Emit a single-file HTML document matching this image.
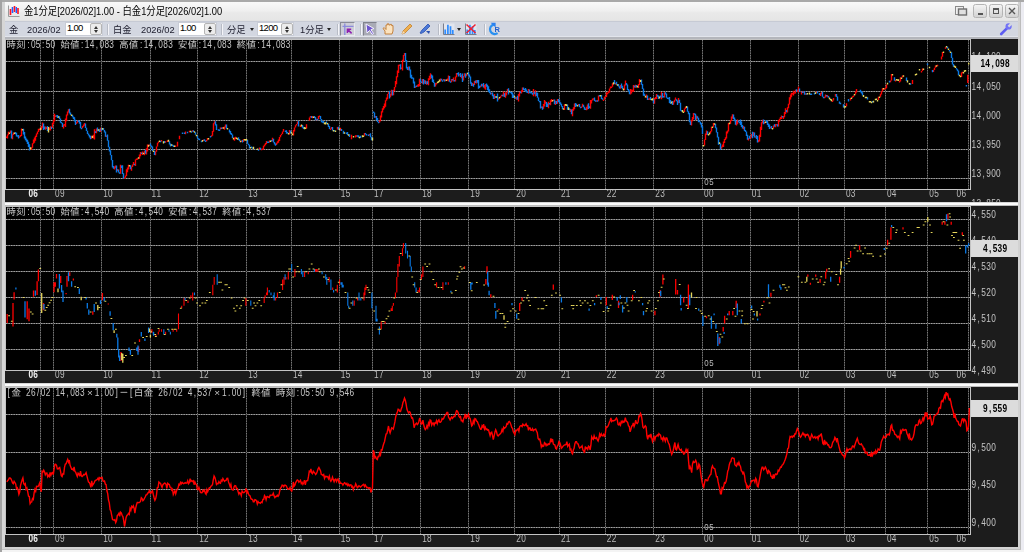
<!DOCTYPE html>
<html lang="ja">
<head>
<meta charset="utf-8">
<title>金1分足[2026/02]1.00 - 白金1分足[2026/02]1.00</title>
<style>
html,body{margin:0;padding:0;}
body{width:1024px;height:552px;overflow:hidden;background:#e2e2e2;position:relative;font-family:"Liberation Sans","Noto Sans CJK JP",sans-serif;}
.abs{position:absolute;}
#ftop{left:0;top:0;width:1024px;height:2px;background:#a9a9a9;}
#fleft{left:0;top:0;width:2px;height:552px;background:#a3a3a3;}
#fleft2{left:2px;top:2px;width:3px;height:548px;background:#d6d6d6;}
#fr1{left:1018px;top:2px;width:2px;height:548px;background:#d2d2d2;}
#fr2{left:1020px;top:2px;width:1px;height:548px;background:#bcbcbc;}
#fr3{left:1021px;top:2px;width:3px;height:550px;background:#ececf2;}
#fb1{left:2px;top:547px;width:1018px;height:2px;background:#d4d4d4;}
#fb2{left:2px;top:549px;width:1019px;height:1px;background:#c0c0c0;}
#fb3{left:2px;top:550px;width:1022px;height:2px;background:#f4f4f4;}
#title{left:4px;top:2px;width:1015px;height:18px;background:linear-gradient(#f9f9f9,#efefef 50%,#e9e9e9 60%,#e6e6e6);}
#ttext{left:24px;top:5px;font-size:11px;line-height:13px;color:#000;white-space:nowrap;transform-origin:0 0;transform:scaleX(0.848);}
#tool{left:4px;top:21px;width:1015px;height:16px;background:#d3d7e1;border-top:1px solid #c6cad4;border-bottom:1px solid #e2e5ec;box-sizing:border-box}
#toolb{left:4px;top:37px;width:1015px;height:2px;background:#b4b6bc;}
.tt{position:absolute;top:25px;font-size:9.3px;line-height:10px;color:#1c1c2c;white-space:nowrap;}
.inp{position:absolute;top:22px;height:14px;background:#fff;border:1px solid #c8ccd6;box-sizing:border-box;font-size:9.5px;line-height:10px;padding-left:1px;color:#000;letter-spacing:-0.7px}
.spin{position:absolute;right:0;top:0;width:12px;height:12px;background:#ececec;border:1px solid #b4b4b4;border-radius:2px;box-sizing:border-box}
.spin:before{content:"";position:absolute;left:2.5px;top:1.5px;border:2.5px solid transparent;border-top:0;border-bottom:3px solid #333;}
.spin:after{content:"";position:absolute;left:2.5px;top:6px;border:2.5px solid transparent;border-bottom:0;border-top:3px solid #333;}
.sep{position:absolute;top:24px;width:1px;height:11px;background:#f4f4f8;border-left:1px solid #b8bcc6}
.dd{position:absolute;top:28px;border:2.5px solid transparent;border-bottom:0;border-top:3px solid #222;}
.sel{position:absolute;top:22px;height:14px;background:#b9bdc9;border:1px solid #8c90a0;box-sizing:border-box}
.wb{position:absolute;top:4px;width:14px;height:14px;box-sizing:border-box;border:1px solid #b4b4b4;border-radius:2.5px;background:linear-gradient(#f4f4f4,#d2d2d2);}
</style>
</head>
<body>
<div class="abs" id="title"></div>
<div class="abs" id="tool"></div>
<div class="abs" id="toolb"></div>
<svg width="1024" height="552" viewBox="0 0 1024 552" style="position:absolute;left:0;top:0;will-change:transform" font-family="&quot;Liberation Mono&quot;,&quot;IPAGothic&quot;,monospace">
<rect x="5" y="39" width="966" height="151" fill="#000"/>
<rect x="971" y="39" width="47" height="163" fill="#1c1c1c"/>
<rect x="5" y="190" width="966" height="12" fill="#1c1c1c"/>
<g>
<line x1="6" x2="970" y1="61.5" y2="61.5" stroke="#4c4c4c" stroke-width="1" stroke-dasharray="none" opacity="1"/>
<line x1="6" x2="970" y1="61.5" y2="61.5" stroke="#a4a4a4" stroke-width="1" stroke-dasharray="1.4 1.1" opacity="1"/>
<line x1="6" x2="970" y1="91.5" y2="91.5" stroke="#4c4c4c" stroke-width="1" stroke-dasharray="none" opacity="1"/>
<line x1="6" x2="970" y1="91.5" y2="91.5" stroke="#a4a4a4" stroke-width="1" stroke-dasharray="1.4 1.1" opacity="1"/>
<line x1="6" x2="970" y1="120.5" y2="120.5" stroke="#4c4c4c" stroke-width="1" stroke-dasharray="none" opacity="1"/>
<line x1="6" x2="970" y1="120.5" y2="120.5" stroke="#a4a4a4" stroke-width="1" stroke-dasharray="1.4 1.1" opacity="1"/>
<line x1="6" x2="970" y1="149.5" y2="149.5" stroke="#4c4c4c" stroke-width="1" stroke-dasharray="none" opacity="1"/>
<line x1="6" x2="970" y1="149.5" y2="149.5" stroke="#a4a4a4" stroke-width="1" stroke-dasharray="1.4 1.1" opacity="1"/>
<line x1="6" x2="970" y1="178.5" y2="178.5" stroke="#4c4c4c" stroke-width="1" stroke-dasharray="none" opacity="1"/>
<line x1="6" x2="970" y1="178.5" y2="178.5" stroke="#a4a4a4" stroke-width="1" stroke-dasharray="1.4 1.1" opacity="1"/>
<line x1="40.5" x2="40.5" y1="40" y2="189" stroke="#2c2c2c" stroke-width="1" stroke-dasharray="none" opacity="1"/>
<line x1="40.5" x2="40.5" y1="40" y2="189" stroke="#787878" stroke-width="1" stroke-dasharray="1.4 1.1" opacity="1"/>
<line x1="53.5" x2="53.5" y1="40" y2="189" stroke="#2c2c2c" stroke-width="1" stroke-dasharray="none" opacity="1"/>
<line x1="53.5" x2="53.5" y1="40" y2="189" stroke="#787878" stroke-width="1" stroke-dasharray="1.4 1.1" opacity="1"/>
<line x1="101.5" x2="101.5" y1="40" y2="189" stroke="#2c2c2c" stroke-width="1" stroke-dasharray="none" opacity="1"/>
<line x1="101.5" x2="101.5" y1="40" y2="189" stroke="#787878" stroke-width="1" stroke-dasharray="1.4 1.1" opacity="1"/>
<line x1="150.5" x2="150.5" y1="40" y2="189" stroke="#2c2c2c" stroke-width="1" stroke-dasharray="none" opacity="1"/>
<line x1="150.5" x2="150.5" y1="40" y2="189" stroke="#787878" stroke-width="1" stroke-dasharray="1.4 1.1" opacity="1"/>
<line x1="197.5" x2="197.5" y1="40" y2="189" stroke="#2c2c2c" stroke-width="1" stroke-dasharray="none" opacity="1"/>
<line x1="197.5" x2="197.5" y1="40" y2="189" stroke="#787878" stroke-width="1" stroke-dasharray="1.4 1.1" opacity="1"/>
<line x1="246.5" x2="246.5" y1="40" y2="189" stroke="#2c2c2c" stroke-width="1" stroke-dasharray="none" opacity="1"/>
<line x1="246.5" x2="246.5" y1="40" y2="189" stroke="#787878" stroke-width="1" stroke-dasharray="1.4 1.1" opacity="1"/>
<line x1="291.5" x2="291.5" y1="40" y2="189" stroke="#2c2c2c" stroke-width="1" stroke-dasharray="none" opacity="1"/>
<line x1="291.5" x2="291.5" y1="40" y2="189" stroke="#787878" stroke-width="1" stroke-dasharray="1.4 1.1" opacity="1"/>
<line x1="339.5" x2="339.5" y1="40" y2="189" stroke="#2c2c2c" stroke-width="1" stroke-dasharray="none" opacity="1"/>
<line x1="339.5" x2="339.5" y1="40" y2="189" stroke="#787878" stroke-width="1" stroke-dasharray="1.4 1.1" opacity="1"/>
<line x1="372.5" x2="372.5" y1="40" y2="189" stroke="#2c2c2c" stroke-width="1" stroke-dasharray="none" opacity="1"/>
<line x1="372.5" x2="372.5" y1="40" y2="189" stroke="#787878" stroke-width="1" stroke-dasharray="1.4 1.1" opacity="1"/>
<line x1="420.5" x2="420.5" y1="40" y2="189" stroke="#2c2c2c" stroke-width="1" stroke-dasharray="none" opacity="1"/>
<line x1="420.5" x2="420.5" y1="40" y2="189" stroke="#787878" stroke-width="1" stroke-dasharray="1.4 1.1" opacity="1"/>
<line x1="468.5" x2="468.5" y1="40" y2="189" stroke="#2c2c2c" stroke-width="1" stroke-dasharray="none" opacity="1"/>
<line x1="468.5" x2="468.5" y1="40" y2="189" stroke="#787878" stroke-width="1" stroke-dasharray="1.4 1.1" opacity="1"/>
<line x1="514.5" x2="514.5" y1="40" y2="189" stroke="#2c2c2c" stroke-width="1" stroke-dasharray="none" opacity="1"/>
<line x1="514.5" x2="514.5" y1="40" y2="189" stroke="#787878" stroke-width="1" stroke-dasharray="1.4 1.1" opacity="1"/>
<line x1="559.5" x2="559.5" y1="40" y2="189" stroke="#2c2c2c" stroke-width="1" stroke-dasharray="none" opacity="1"/>
<line x1="559.5" x2="559.5" y1="40" y2="189" stroke="#787878" stroke-width="1" stroke-dasharray="1.4 1.1" opacity="1"/>
<line x1="605.5" x2="605.5" y1="40" y2="189" stroke="#2c2c2c" stroke-width="1" stroke-dasharray="none" opacity="1"/>
<line x1="605.5" x2="605.5" y1="40" y2="189" stroke="#787878" stroke-width="1" stroke-dasharray="1.4 1.1" opacity="1"/>
<line x1="653.5" x2="653.5" y1="40" y2="189" stroke="#2c2c2c" stroke-width="1" stroke-dasharray="none" opacity="1"/>
<line x1="653.5" x2="653.5" y1="40" y2="189" stroke="#787878" stroke-width="1" stroke-dasharray="1.4 1.1" opacity="1"/>
<line x1="702.5" x2="702.5" y1="40" y2="189" stroke="#2c2c2c" stroke-width="1" stroke-dasharray="none" opacity="1"/>
<line x1="702.5" x2="702.5" y1="40" y2="189" stroke="#787878" stroke-width="1" stroke-dasharray="1.4 1.1" opacity="1"/>
<line x1="750.5" x2="750.5" y1="40" y2="189" stroke="#2c2c2c" stroke-width="1" stroke-dasharray="none" opacity="1"/>
<line x1="750.5" x2="750.5" y1="40" y2="189" stroke="#787878" stroke-width="1" stroke-dasharray="1.4 1.1" opacity="1"/>
<line x1="798.5" x2="798.5" y1="40" y2="189" stroke="#2c2c2c" stroke-width="1" stroke-dasharray="none" opacity="1"/>
<line x1="798.5" x2="798.5" y1="40" y2="189" stroke="#787878" stroke-width="1" stroke-dasharray="1.4 1.1" opacity="1"/>
<line x1="844.5" x2="844.5" y1="40" y2="189" stroke="#2c2c2c" stroke-width="1" stroke-dasharray="none" opacity="1"/>
<line x1="844.5" x2="844.5" y1="40" y2="189" stroke="#787878" stroke-width="1" stroke-dasharray="1.4 1.1" opacity="1"/>
<line x1="885.5" x2="885.5" y1="40" y2="189" stroke="#2c2c2c" stroke-width="1" stroke-dasharray="none" opacity="1"/>
<line x1="885.5" x2="885.5" y1="40" y2="189" stroke="#787878" stroke-width="1" stroke-dasharray="1.4 1.1" opacity="1"/>
<line x1="927.5" x2="927.5" y1="40" y2="189" stroke="#2c2c2c" stroke-width="1" stroke-dasharray="none" opacity="1"/>
<line x1="927.5" x2="927.5" y1="40" y2="189" stroke="#787878" stroke-width="1" stroke-dasharray="1.4 1.1" opacity="1"/>
<line x1="968.5" x2="968.5" y1="40" y2="189" stroke="#2c2c2c" stroke-width="1" stroke-dasharray="none" opacity="1"/>
<line x1="968.5" x2="968.5" y1="40" y2="189" stroke="#787878" stroke-width="1" stroke-dasharray="1.4 1.1" opacity="1"/>
</g>
<rect x="5" y="206" width="966" height="165" fill="#000"/>
<rect x="971" y="206" width="47" height="177" fill="#1c1c1c"/>
<rect x="5" y="371" width="966" height="12" fill="#1c1c1c"/>
<g>
<line x1="6" x2="970" y1="219.5" y2="219.5" stroke="#4c4c4c" stroke-width="1" stroke-dasharray="none" opacity="1"/>
<line x1="6" x2="970" y1="219.5" y2="219.5" stroke="#a4a4a4" stroke-width="1" stroke-dasharray="1.4 1.1" opacity="1"/>
<line x1="6" x2="970" y1="245.5" y2="245.5" stroke="#4c4c4c" stroke-width="1" stroke-dasharray="none" opacity="1"/>
<line x1="6" x2="970" y1="245.5" y2="245.5" stroke="#a4a4a4" stroke-width="1" stroke-dasharray="1.4 1.1" opacity="1"/>
<line x1="6" x2="970" y1="271.5" y2="271.5" stroke="#4c4c4c" stroke-width="1" stroke-dasharray="none" opacity="1"/>
<line x1="6" x2="970" y1="271.5" y2="271.5" stroke="#a4a4a4" stroke-width="1" stroke-dasharray="1.4 1.1" opacity="1"/>
<line x1="6" x2="970" y1="297.5" y2="297.5" stroke="#4c4c4c" stroke-width="1" stroke-dasharray="none" opacity="1"/>
<line x1="6" x2="970" y1="297.5" y2="297.5" stroke="#a4a4a4" stroke-width="1" stroke-dasharray="1.4 1.1" opacity="1"/>
<line x1="6" x2="970" y1="323.5" y2="323.5" stroke="#4c4c4c" stroke-width="1" stroke-dasharray="none" opacity="1"/>
<line x1="6" x2="970" y1="323.5" y2="323.5" stroke="#a4a4a4" stroke-width="1" stroke-dasharray="1.4 1.1" opacity="1"/>
<line x1="6" x2="970" y1="349.5" y2="349.5" stroke="#4c4c4c" stroke-width="1" stroke-dasharray="none" opacity="1"/>
<line x1="6" x2="970" y1="349.5" y2="349.5" stroke="#a4a4a4" stroke-width="1" stroke-dasharray="1.4 1.1" opacity="1"/>
<line x1="40.5" x2="40.5" y1="207" y2="370" stroke="#2c2c2c" stroke-width="1" stroke-dasharray="none" opacity="1"/>
<line x1="40.5" x2="40.5" y1="207" y2="370" stroke="#787878" stroke-width="1" stroke-dasharray="1.4 1.1" opacity="1"/>
<line x1="53.5" x2="53.5" y1="207" y2="370" stroke="#2c2c2c" stroke-width="1" stroke-dasharray="none" opacity="1"/>
<line x1="53.5" x2="53.5" y1="207" y2="370" stroke="#787878" stroke-width="1" stroke-dasharray="1.4 1.1" opacity="1"/>
<line x1="101.5" x2="101.5" y1="207" y2="370" stroke="#2c2c2c" stroke-width="1" stroke-dasharray="none" opacity="1"/>
<line x1="101.5" x2="101.5" y1="207" y2="370" stroke="#787878" stroke-width="1" stroke-dasharray="1.4 1.1" opacity="1"/>
<line x1="150.5" x2="150.5" y1="207" y2="370" stroke="#2c2c2c" stroke-width="1" stroke-dasharray="none" opacity="1"/>
<line x1="150.5" x2="150.5" y1="207" y2="370" stroke="#787878" stroke-width="1" stroke-dasharray="1.4 1.1" opacity="1"/>
<line x1="197.5" x2="197.5" y1="207" y2="370" stroke="#2c2c2c" stroke-width="1" stroke-dasharray="none" opacity="1"/>
<line x1="197.5" x2="197.5" y1="207" y2="370" stroke="#787878" stroke-width="1" stroke-dasharray="1.4 1.1" opacity="1"/>
<line x1="246.5" x2="246.5" y1="207" y2="370" stroke="#2c2c2c" stroke-width="1" stroke-dasharray="none" opacity="1"/>
<line x1="246.5" x2="246.5" y1="207" y2="370" stroke="#787878" stroke-width="1" stroke-dasharray="1.4 1.1" opacity="1"/>
<line x1="291.5" x2="291.5" y1="207" y2="370" stroke="#2c2c2c" stroke-width="1" stroke-dasharray="none" opacity="1"/>
<line x1="291.5" x2="291.5" y1="207" y2="370" stroke="#787878" stroke-width="1" stroke-dasharray="1.4 1.1" opacity="1"/>
<line x1="339.5" x2="339.5" y1="207" y2="370" stroke="#2c2c2c" stroke-width="1" stroke-dasharray="none" opacity="1"/>
<line x1="339.5" x2="339.5" y1="207" y2="370" stroke="#787878" stroke-width="1" stroke-dasharray="1.4 1.1" opacity="1"/>
<line x1="372.5" x2="372.5" y1="207" y2="370" stroke="#2c2c2c" stroke-width="1" stroke-dasharray="none" opacity="1"/>
<line x1="372.5" x2="372.5" y1="207" y2="370" stroke="#787878" stroke-width="1" stroke-dasharray="1.4 1.1" opacity="1"/>
<line x1="420.5" x2="420.5" y1="207" y2="370" stroke="#2c2c2c" stroke-width="1" stroke-dasharray="none" opacity="1"/>
<line x1="420.5" x2="420.5" y1="207" y2="370" stroke="#787878" stroke-width="1" stroke-dasharray="1.4 1.1" opacity="1"/>
<line x1="468.5" x2="468.5" y1="207" y2="370" stroke="#2c2c2c" stroke-width="1" stroke-dasharray="none" opacity="1"/>
<line x1="468.5" x2="468.5" y1="207" y2="370" stroke="#787878" stroke-width="1" stroke-dasharray="1.4 1.1" opacity="1"/>
<line x1="514.5" x2="514.5" y1="207" y2="370" stroke="#2c2c2c" stroke-width="1" stroke-dasharray="none" opacity="1"/>
<line x1="514.5" x2="514.5" y1="207" y2="370" stroke="#787878" stroke-width="1" stroke-dasharray="1.4 1.1" opacity="1"/>
<line x1="559.5" x2="559.5" y1="207" y2="370" stroke="#2c2c2c" stroke-width="1" stroke-dasharray="none" opacity="1"/>
<line x1="559.5" x2="559.5" y1="207" y2="370" stroke="#787878" stroke-width="1" stroke-dasharray="1.4 1.1" opacity="1"/>
<line x1="605.5" x2="605.5" y1="207" y2="370" stroke="#2c2c2c" stroke-width="1" stroke-dasharray="none" opacity="1"/>
<line x1="605.5" x2="605.5" y1="207" y2="370" stroke="#787878" stroke-width="1" stroke-dasharray="1.4 1.1" opacity="1"/>
<line x1="653.5" x2="653.5" y1="207" y2="370" stroke="#2c2c2c" stroke-width="1" stroke-dasharray="none" opacity="1"/>
<line x1="653.5" x2="653.5" y1="207" y2="370" stroke="#787878" stroke-width="1" stroke-dasharray="1.4 1.1" opacity="1"/>
<line x1="702.5" x2="702.5" y1="207" y2="370" stroke="#2c2c2c" stroke-width="1" stroke-dasharray="none" opacity="1"/>
<line x1="702.5" x2="702.5" y1="207" y2="370" stroke="#787878" stroke-width="1" stroke-dasharray="1.4 1.1" opacity="1"/>
<line x1="750.5" x2="750.5" y1="207" y2="370" stroke="#2c2c2c" stroke-width="1" stroke-dasharray="none" opacity="1"/>
<line x1="750.5" x2="750.5" y1="207" y2="370" stroke="#787878" stroke-width="1" stroke-dasharray="1.4 1.1" opacity="1"/>
<line x1="798.5" x2="798.5" y1="207" y2="370" stroke="#2c2c2c" stroke-width="1" stroke-dasharray="none" opacity="1"/>
<line x1="798.5" x2="798.5" y1="207" y2="370" stroke="#787878" stroke-width="1" stroke-dasharray="1.4 1.1" opacity="1"/>
<line x1="844.5" x2="844.5" y1="207" y2="370" stroke="#2c2c2c" stroke-width="1" stroke-dasharray="none" opacity="1"/>
<line x1="844.5" x2="844.5" y1="207" y2="370" stroke="#787878" stroke-width="1" stroke-dasharray="1.4 1.1" opacity="1"/>
<line x1="885.5" x2="885.5" y1="207" y2="370" stroke="#2c2c2c" stroke-width="1" stroke-dasharray="none" opacity="1"/>
<line x1="885.5" x2="885.5" y1="207" y2="370" stroke="#787878" stroke-width="1" stroke-dasharray="1.4 1.1" opacity="1"/>
<line x1="927.5" x2="927.5" y1="207" y2="370" stroke="#2c2c2c" stroke-width="1" stroke-dasharray="none" opacity="1"/>
<line x1="927.5" x2="927.5" y1="207" y2="370" stroke="#787878" stroke-width="1" stroke-dasharray="1.4 1.1" opacity="1"/>
<line x1="968.5" x2="968.5" y1="207" y2="370" stroke="#2c2c2c" stroke-width="1" stroke-dasharray="none" opacity="1"/>
<line x1="968.5" x2="968.5" y1="207" y2="370" stroke="#787878" stroke-width="1" stroke-dasharray="1.4 1.1" opacity="1"/>
</g>
<rect x="5" y="387" width="966" height="148" fill="#000"/>
<rect x="971" y="387" width="47" height="160" fill="#1c1c1c"/>
<rect x="5" y="535" width="966" height="12" fill="#1c1c1c"/>
<g>
<line x1="6" x2="970" y1="414.5" y2="414.5" stroke="#4c4c4c" stroke-width="1" stroke-dasharray="none" opacity="1"/>
<line x1="6" x2="970" y1="414.5" y2="414.5" stroke="#a4a4a4" stroke-width="1" stroke-dasharray="1.4 1.1" opacity="1"/>
<line x1="6" x2="970" y1="452.5" y2="452.5" stroke="#4c4c4c" stroke-width="1" stroke-dasharray="none" opacity="1"/>
<line x1="6" x2="970" y1="452.5" y2="452.5" stroke="#a4a4a4" stroke-width="1" stroke-dasharray="1.4 1.1" opacity="1"/>
<line x1="6" x2="970" y1="489.5" y2="489.5" stroke="#4c4c4c" stroke-width="1" stroke-dasharray="none" opacity="1"/>
<line x1="6" x2="970" y1="489.5" y2="489.5" stroke="#a4a4a4" stroke-width="1" stroke-dasharray="1.4 1.1" opacity="1"/>
<line x1="6" x2="970" y1="527.5" y2="527.5" stroke="#4c4c4c" stroke-width="1" stroke-dasharray="none" opacity="1"/>
<line x1="6" x2="970" y1="527.5" y2="527.5" stroke="#a4a4a4" stroke-width="1" stroke-dasharray="1.4 1.1" opacity="1"/>
<line x1="40.5" x2="40.5" y1="388" y2="534" stroke="#2c2c2c" stroke-width="1" stroke-dasharray="none" opacity="1"/>
<line x1="40.5" x2="40.5" y1="388" y2="534" stroke="#787878" stroke-width="1" stroke-dasharray="1.4 1.1" opacity="1"/>
<line x1="53.5" x2="53.5" y1="388" y2="534" stroke="#2c2c2c" stroke-width="1" stroke-dasharray="none" opacity="1"/>
<line x1="53.5" x2="53.5" y1="388" y2="534" stroke="#787878" stroke-width="1" stroke-dasharray="1.4 1.1" opacity="1"/>
<line x1="101.5" x2="101.5" y1="388" y2="534" stroke="#2c2c2c" stroke-width="1" stroke-dasharray="none" opacity="1"/>
<line x1="101.5" x2="101.5" y1="388" y2="534" stroke="#787878" stroke-width="1" stroke-dasharray="1.4 1.1" opacity="1"/>
<line x1="150.5" x2="150.5" y1="388" y2="534" stroke="#2c2c2c" stroke-width="1" stroke-dasharray="none" opacity="1"/>
<line x1="150.5" x2="150.5" y1="388" y2="534" stroke="#787878" stroke-width="1" stroke-dasharray="1.4 1.1" opacity="1"/>
<line x1="197.5" x2="197.5" y1="388" y2="534" stroke="#2c2c2c" stroke-width="1" stroke-dasharray="none" opacity="1"/>
<line x1="197.5" x2="197.5" y1="388" y2="534" stroke="#787878" stroke-width="1" stroke-dasharray="1.4 1.1" opacity="1"/>
<line x1="246.5" x2="246.5" y1="388" y2="534" stroke="#2c2c2c" stroke-width="1" stroke-dasharray="none" opacity="1"/>
<line x1="246.5" x2="246.5" y1="388" y2="534" stroke="#787878" stroke-width="1" stroke-dasharray="1.4 1.1" opacity="1"/>
<line x1="291.5" x2="291.5" y1="388" y2="534" stroke="#2c2c2c" stroke-width="1" stroke-dasharray="none" opacity="1"/>
<line x1="291.5" x2="291.5" y1="388" y2="534" stroke="#787878" stroke-width="1" stroke-dasharray="1.4 1.1" opacity="1"/>
<line x1="339.5" x2="339.5" y1="388" y2="534" stroke="#2c2c2c" stroke-width="1" stroke-dasharray="none" opacity="1"/>
<line x1="339.5" x2="339.5" y1="388" y2="534" stroke="#787878" stroke-width="1" stroke-dasharray="1.4 1.1" opacity="1"/>
<line x1="372.5" x2="372.5" y1="388" y2="534" stroke="#2c2c2c" stroke-width="1" stroke-dasharray="none" opacity="1"/>
<line x1="372.5" x2="372.5" y1="388" y2="534" stroke="#787878" stroke-width="1" stroke-dasharray="1.4 1.1" opacity="1"/>
<line x1="420.5" x2="420.5" y1="388" y2="534" stroke="#2c2c2c" stroke-width="1" stroke-dasharray="none" opacity="1"/>
<line x1="420.5" x2="420.5" y1="388" y2="534" stroke="#787878" stroke-width="1" stroke-dasharray="1.4 1.1" opacity="1"/>
<line x1="468.5" x2="468.5" y1="388" y2="534" stroke="#2c2c2c" stroke-width="1" stroke-dasharray="none" opacity="1"/>
<line x1="468.5" x2="468.5" y1="388" y2="534" stroke="#787878" stroke-width="1" stroke-dasharray="1.4 1.1" opacity="1"/>
<line x1="514.5" x2="514.5" y1="388" y2="534" stroke="#2c2c2c" stroke-width="1" stroke-dasharray="none" opacity="1"/>
<line x1="514.5" x2="514.5" y1="388" y2="534" stroke="#787878" stroke-width="1" stroke-dasharray="1.4 1.1" opacity="1"/>
<line x1="559.5" x2="559.5" y1="388" y2="534" stroke="#2c2c2c" stroke-width="1" stroke-dasharray="none" opacity="1"/>
<line x1="559.5" x2="559.5" y1="388" y2="534" stroke="#787878" stroke-width="1" stroke-dasharray="1.4 1.1" opacity="1"/>
<line x1="605.5" x2="605.5" y1="388" y2="534" stroke="#2c2c2c" stroke-width="1" stroke-dasharray="none" opacity="1"/>
<line x1="605.5" x2="605.5" y1="388" y2="534" stroke="#787878" stroke-width="1" stroke-dasharray="1.4 1.1" opacity="1"/>
<line x1="653.5" x2="653.5" y1="388" y2="534" stroke="#2c2c2c" stroke-width="1" stroke-dasharray="none" opacity="1"/>
<line x1="653.5" x2="653.5" y1="388" y2="534" stroke="#787878" stroke-width="1" stroke-dasharray="1.4 1.1" opacity="1"/>
<line x1="702.5" x2="702.5" y1="388" y2="534" stroke="#2c2c2c" stroke-width="1" stroke-dasharray="none" opacity="1"/>
<line x1="702.5" x2="702.5" y1="388" y2="534" stroke="#787878" stroke-width="1" stroke-dasharray="1.4 1.1" opacity="1"/>
<line x1="750.5" x2="750.5" y1="388" y2="534" stroke="#2c2c2c" stroke-width="1" stroke-dasharray="none" opacity="1"/>
<line x1="750.5" x2="750.5" y1="388" y2="534" stroke="#787878" stroke-width="1" stroke-dasharray="1.4 1.1" opacity="1"/>
<line x1="798.5" x2="798.5" y1="388" y2="534" stroke="#2c2c2c" stroke-width="1" stroke-dasharray="none" opacity="1"/>
<line x1="798.5" x2="798.5" y1="388" y2="534" stroke="#787878" stroke-width="1" stroke-dasharray="1.4 1.1" opacity="1"/>
<line x1="844.5" x2="844.5" y1="388" y2="534" stroke="#2c2c2c" stroke-width="1" stroke-dasharray="none" opacity="1"/>
<line x1="844.5" x2="844.5" y1="388" y2="534" stroke="#787878" stroke-width="1" stroke-dasharray="1.4 1.1" opacity="1"/>
<line x1="885.5" x2="885.5" y1="388" y2="534" stroke="#2c2c2c" stroke-width="1" stroke-dasharray="none" opacity="1"/>
<line x1="885.5" x2="885.5" y1="388" y2="534" stroke="#787878" stroke-width="1" stroke-dasharray="1.4 1.1" opacity="1"/>
<line x1="927.5" x2="927.5" y1="388" y2="534" stroke="#2c2c2c" stroke-width="1" stroke-dasharray="none" opacity="1"/>
<line x1="927.5" x2="927.5" y1="388" y2="534" stroke="#787878" stroke-width="1" stroke-dasharray="1.4 1.1" opacity="1"/>
<line x1="968.5" x2="968.5" y1="388" y2="534" stroke="#2c2c2c" stroke-width="1" stroke-dasharray="none" opacity="1"/>
<line x1="968.5" x2="968.5" y1="388" y2="534" stroke="#787878" stroke-width="1" stroke-dasharray="1.4 1.1" opacity="1"/>
</g>
<g>
<path d="M6.5 136.5V138.0M7.5 134.6V138.4M8.5 131.8V135.2M10.5 130.5V132.9M12.5 134.3V139.3M13.5 132.5V135.1M19.5 136.2V137.7M20.5 135.1V136.7M21.5 128.5V136.1M31.5 147.2V149.9M32.5 143.3V147.8M33.5 139.5V143.7M34.5 137.5V142.7M35.5 135.8V140.7M36.5 133.5V137.1M37.5 131.5V134.2M38.5 128.7V131.9M39.5 128.7V130.2M41.5 126.0V129.8M42.5 122.6V127.7M45.5 126.5V129.7M46.5 126.9V129.1M49.5 127.7V130.0M50.5 126.2V130.5M52.5 122.7V128.0M53.5 119.8V124.3M54.5 113.7V121.6M55.5 115.4V116.9M63.5 124.6V128.5M64.5 124.1V125.7M65.5 118.5V127.1M66.5 114.5V121.3M67.5 111.6V115.6M68.5 109.3V112.6M76.5 122.3V123.9M77.5 120.6V122.8M82.5 125.9V128.3M83.5 124.5V126.8M84.5 123.0V125.7M91.5 135.7V138.8M93.5 134.8V138.4M94.5 129.2V139.5M96.5 128.5V133.2M100.5 127.8V132.1M106.5 135.4V136.9M114.5 166.6V169.6M115.5 165.4V168.3M117.5 169.1V170.9M120.5 164.7V173.8M124.5 177.4V178.9M125.5 175.4V177.8M126.5 169.3V176.1M127.5 167.6V172.2M128.5 164.7V169.4M131.5 166.5V170.7M132.5 164.4V167.1M133.5 161.9V165.3M135.5 159.6V166.1M136.5 158.5V160.0M137.5 158.2V159.7M139.5 154.5V158.8M140.5 152.1V156.2M142.5 151.4V155.1M144.5 150.8V155.3M146.5 148.3V154.4M147.5 144.6V151.5M149.5 144.4V145.9M155.5 151.4V155.3M156.5 146.6V151.8M157.5 142.7V146.6M158.5 141.5V143.2M161.5 140.0V141.5M165.5 141.3V142.8M167.5 140.2V142.1M175.5 145.4V146.9M177.5 141.8V146.6M179.5 135.7V139.3M185.5 131.5V134.2M189.5 130.7V132.2M192.5 130.2V131.8M203.5 139.5V141.0M206.5 140.0V141.5M207.5 138.1V140.2M211.5 135.2V136.7M212.5 130.9V135.7M213.5 123.3V131.8M214.5 121.2V123.7M220.5 127.6V129.5M222.5 127.3V128.8M224.5 126.6V129.7M225.5 124.6V127.6M234.5 137.5V140.8M235.5 136.7V139.3M241.5 140.6V142.1M243.5 139.3V141.9M259.5 147.4V150.1M261.5 148.7V150.2M262.5 148.5V150.0M263.5 145.8V149.4M264.5 144.4V146.4M265.5 142.9V145.2M266.5 140.9V144.1M269.5 140.5V142.4M272.5 137.8V141.2M276.5 142.7V145.1M277.5 141.3V143.5M278.5 139.5V142.8M279.5 137.0V141.0M280.5 135.0V137.3M281.5 133.7V135.2M282.5 131.4V134.1M283.5 128.9V131.7M289.5 130.0V134.4M293.5 129.9V135.6M294.5 127.5V131.6M295.5 125.3V127.6M296.5 124.1V125.6M297.5 121.6V124.1M300.5 125.3V126.9M306.5 124.3V128.6M309.5 117.5V120.8M310.5 116.1V117.6M312.5 116.0V118.3M316.5 118.8V120.3M318.5 115.9V119.3M319.5 115.4V116.9M330.5 128.6V130.1M331.5 126.9V128.9M337.5 127.0V129.6M340.5 127.7V130.7M351.5 134.8V139.2M355.5 135.2V137.6M356.5 135.3V136.8M364.5 133.1V135.8M369.5 133.9V135.4M375.5 116.0V117.8M379.5 120.6V122.7M380.5 115.5V121.3M381.5 111.2V117.5M382.5 108.2V112.5M383.5 106.1V109.7M384.5 103.5V108.3M385.5 100.2V106.7M386.5 97.5V100.7M387.5 94.0V99.2M388.5 91.9V94.1M390.5 93.8V97.2M391.5 89.8V95.5M393.5 89.8V95.3M394.5 86.9V91.0M395.5 81.1V87.3M396.5 76.3V84.2M397.5 70.4V77.2M398.5 64.7V72.9M399.5 64.6V66.1M401.5 67.6V69.1M402.5 59.7V70.4M403.5 54.9V61.2M404.5 52.9V55.8M408.5 66.5V70.3M415.5 86.2V87.7M417.5 84.8V86.7M418.5 84.0V86.7M419.5 78.7V86.3M422.5 79.1V83.8M424.5 80.0V83.4M426.5 81.3V84.8M428.5 78.3V85.3M429.5 75.7V80.1M430.5 73.2V79.1M435.5 83.1V86.4M436.5 83.1V84.6M440.5 78.4V81.6M443.5 79.0V80.6M445.5 79.6V81.2M447.5 78.6V80.4M448.5 75.4V81.5M451.5 79.1V82.2M453.5 77.4V81.6M455.5 76.6V81.6M456.5 73.1V77.2M459.5 74.0V75.5M461.5 74.7V78.2M463.5 76.1V80.6M464.5 73.2V76.5M466.5 73.7V76.2M472.5 83.0V86.0M474.5 81.1V85.0M476.5 79.9V83.5M480.5 85.6V87.2M482.5 84.1V86.3M484.5 85.0V88.5M485.5 84.1V89.8M491.5 92.8V94.3M494.5 94.1V99.0M498.5 98.3V99.8M500.5 96.2V97.7M501.5 94.8V96.3M503.5 91.4V96.6M505.5 92.2V97.7M506.5 92.2V95.6M507.5 89.1V92.8M516.5 96.9V99.8M518.5 94.0V101.6M519.5 91.7V96.4M521.5 90.2V93.5M522.5 87.5V91.9M528.5 89.1V93.8M533.5 88.9V96.3M535.5 90.3V96.4M541.5 106.4V107.9M543.5 104.0V108.8M544.5 99.9V106.4M545.5 101.2V103.8M548.5 101.8V108.3M550.5 100.3V105.2M551.5 99.0V102.0M553.5 99.5V101.0M555.5 100.8V104.9M557.5 99.0V103.7M564.5 104.2V110.0M570.5 108.9V111.9M572.5 109.0V116.2M573.5 107.3V110.7M574.5 103.5V109.2M578.5 104.0V105.5M581.5 106.4V107.9M582.5 103.7V106.7M586.5 106.7V110.3M587.5 104.6V109.4M590.5 100.1V108.8M591.5 99.9V103.6M592.5 98.4V100.6M593.5 98.3V99.8M596.5 100.2V101.7M598.5 95.4V101.3M603.5 99.5V101.0M604.5 96.7V99.7M605.5 96.0V97.5M606.5 92.2V96.9M607.5 92.7V94.2M608.5 91.2V93.3M609.5 88.4V92.4M610.5 86.6V88.6M611.5 86.4V88.1M612.5 83.3V86.7M615.5 83.0V84.5M620.5 85.1V88.8M624.5 84.4V90.3M625.5 80.5V85.5M630.5 89.1V94.4M631.5 89.4V93.6M632.5 89.7V91.6M633.5 85.1V91.9M635.5 84.7V87.8M638.5 84.0V87.9M639.5 78.9V84.9M646.5 94.5V98.0M648.5 98.5V100.0M649.5 98.2V99.7M654.5 97.9V103.7M655.5 97.0V99.3M656.5 94.0V98.9M661.5 92.1V99.2M664.5 92.3V97.4M673.5 101.3V104.7M674.5 99.7V102.2M675.5 97.5V100.3M678.5 97.9V103.3M684.5 108.6V112.1M685.5 106.8V109.1M691.5 119.7V125.5M692.5 117.1V121.3M693.5 113.1V119.3M696.5 115.6V119.7M704.5 139.6V145.5M705.5 133.6V139.9M706.5 130.4V134.9M710.5 131.0V133.4M711.5 126.7V131.6M713.5 122.9V126.7M721.5 146.4V148.7M722.5 144.5V147.3M723.5 141.6V146.9M724.5 139.0V142.9M725.5 137.3V140.1M726.5 131.5V138.5M727.5 130.5V133.6M728.5 123.1V131.4M730.5 120.3V123.8M731.5 116.5V121.0M732.5 114.3V118.5M736.5 120.9V125.6M737.5 119.5V124.3M743.5 125.9V129.3M748.5 137.9V140.4M750.5 137.1V138.7M751.5 134.1V137.4M753.5 131.9V136.1M755.5 136.2V137.7M758.5 139.9V142.2M759.5 134.8V141.4M760.5 126.7V136.9M761.5 122.2V130.0M762.5 119.8V123.3M764.5 121.8V123.7M770.5 126.7V128.3M773.5 125.4V128.5M775.5 123.9V127.2M776.5 124.1V125.6M778.5 120.1V126.6M779.5 118.7V121.8M780.5 117.0V119.4M781.5 115.5V119.1M783.5 116.1V118.9M784.5 111.9V117.3M785.5 108.3V113.9M787.5 107.3V112.4M788.5 103.8V108.2M789.5 97.2V104.5M790.5 94.6V99.6M791.5 92.7V97.3M792.5 93.0V94.5M793.5 90.7V95.6M794.5 92.3V93.8M795.5 89.7V93.4M797.5 89.7V91.9M798.5 86.7V92.5M801.5 91.4V94.5M803.5 91.5V93.0M805.5 93.3V94.8M816.5 91.5V93.0M820.5 93.1V96.0M821.5 92.0V94.2M824.5 96.8V98.3M825.5 94.4V97.6M827.5 95.0V97.3M832.5 100.6V102.1M833.5 98.0V100.6M835.5 93.9V96.4M846.5 103.2V106.2M850.5 98.1V100.6M852.5 96.2V97.7M853.5 95.5V97.0M855.5 91.6V94.5M856.5 89.0V92.5M878.5 96.8V100.1M880.5 93.7V96.8M881.5 91.3V94.4M882.5 88.2V91.4M884.5 88.2V89.7M885.5 87.8V89.3M886.5 84.5V88.2M890.5 80.4V82.2M891.5 74.1V80.4M895.5 80.1V81.6M899.5 81.1V82.6M900.5 77.2V81.4M902.5 75.5V77.6M912.5 79.9V83.9M921.5 70.9V72.4M922.5 68.4V70.9M933.5 69.7V71.9M934.5 67.8V70.0M935.5 65.6V67.8M937.5 64.7V66.2M941.5 56.5V59.6M942.5 52.0V56.7M945.5 47.3V48.8M961.5 72.4V77.1M962.5 71.8V73.3M967.8 74.8V83.0" stroke="#ff0000" stroke-width="1.4" fill="none"/>
<path d="M11.5 130.5V138.4M15.5 131.9V134.3M16.5 132.7V136.4M17.5 135.2V136.7M18.5 135.1V138.6M23.5 128.7V134.5M24.5 132.1V138.5M25.5 136.5V140.2M26.5 138.4V141.7M27.5 139.7V143.9M28.5 141.8V146.9M29.5 144.3V150.5M43.5 123.5V130.0M44.5 126.5V129.2M47.5 126.0V130.9M51.5 126.7V128.9M56.5 115.3V116.8M57.5 115.0V118.0M59.5 116.2V119.1M60.5 118.4V122.8M61.5 121.9V123.4M62.5 122.9V127.1M69.5 108.7V113.6M70.5 112.6V115.1M72.5 114.7V117.2M73.5 116.4V119.1M74.5 117.2V121.6M75.5 119.8V124.9M78.5 120.2V122.0M79.5 120.7V123.8M80.5 121.9V128.2M81.5 127.7V129.2M85.5 123.4V128.0M86.5 127.8V131.0M87.5 130.7V134.1M88.5 133.4V135.6M89.5 134.7V137.6M90.5 135.8V139.3M95.5 131.3V133.0M97.5 127.6V131.3M99.5 129.3V132.0M101.5 127.9V130.8M103.5 128.1V130.3M104.5 130.0V132.6M105.5 131.5V136.7M107.5 134.6V140.7M108.5 140.3V147.2M109.5 146.7V151.6M110.5 150.3V155.2M111.5 154.9V160.2M112.5 160.0V167.4M113.5 166.1V168.7M116.5 165.5V172.5M118.5 169.6V172.5M119.5 172.2V173.7M121.5 165.4V168.0M122.5 165.3V174.0M123.5 173.2V178.4M130.5 165.2V169.3M134.5 163.8V165.3M141.5 152.5V154.0M145.5 150.0V153.8M150.5 143.4V146.0M151.5 145.4V147.6M152.5 146.6V151.0M154.5 150.7V155.0M160.5 140.7V142.2M164.5 141.1V143.1M169.5 141.2V144.5M170.5 143.6V146.4M172.5 144.5V146.0M173.5 145.2V146.9M182.5 132.5V134.0M184.5 132.5V134.0M187.5 131.8V133.3M191.5 131.3V132.8M193.5 130.3V132.0M195.5 132.2V134.7M197.5 135.5V138.3M198.5 138.3V139.8M199.5 138.7V140.2M201.5 140.7V142.2M204.5 139.3V141.0M205.5 140.6V142.1M210.5 136.0V137.5M215.5 121.3V125.5M216.5 124.3V130.1M218.5 129.3V130.8M219.5 129.5V131.0M221.5 127.6V129.1M226.5 124.4V128.8M229.5 129.5V132.4M230.5 131.1V134.3M231.5 133.0V134.9M232.5 134.5V137.9M238.5 137.2V140.1M239.5 138.9V140.9M242.5 140.1V142.6M247.5 139.8V143.8M248.5 143.8V145.3M249.5 144.8V148.5M251.5 146.6V148.1M252.5 147.2V148.7M258.5 149.2V150.7M260.5 147.7V150.1M267.5 141.5V143.0M268.5 141.4V142.9M271.5 139.9V141.4M273.5 138.7V142.5M274.5 141.9V144.6M275.5 143.4V145.7M285.5 130.5V132.0M286.5 130.2V133.8M287.5 132.1V133.6M290.5 130.5V133.4M298.5 121.1V126.4M302.5 125.0V127.8M303.5 126.7V128.9M311.5 116.1V118.1M314.5 116.0V118.1M315.5 117.0V120.3M317.5 118.8V120.3M320.5 115.9V119.3M321.5 118.9V122.3M322.5 121.3V122.8M323.5 120.9V123.2M326.5 121.6V123.8M328.5 123.7V127.0M329.5 125.9V128.9M332.5 126.9V130.4M334.5 130.0V131.5M338.5 126.8V129.8M341.5 129.0V131.0M343.5 130.8V133.7M346.5 132.6V134.1M347.5 132.0V134.9M349.5 134.2V137.1M357.5 135.2V136.7M358.5 135.2V137.5M360.5 135.7V138.0M365.5 133.0V134.5M366.5 133.9V135.4M368.5 134.4V135.9M370.5 133.3V137.3M371.5 136.7V140.2M373.5 111.5V113.0M374.5 112.4V117.8M376.5 116.0V119.9M377.5 118.1V122.0M378.5 121.7V123.2M389.5 90.7V98.6M392.5 90.3V95.4M400.5 64.2V69.6M405.5 52.9V61.2M406.5 59.9V68.5M407.5 67.0V70.1M409.5 66.4V70.5M410.5 69.5V77.8M411.5 74.7V78.8M412.5 77.2V78.7M413.5 77.8V83.4M414.5 81.4V88.1M416.5 85.6V87.1M420.5 78.9V82.1M421.5 81.5V83.0M423.5 78.9V84.4M425.5 80.5V84.1M427.5 81.3V84.3M431.5 74.4V78.3M432.5 75.6V81.9M433.5 79.5V83.0M434.5 82.4V86.8M441.5 78.7V80.6M442.5 80.2V81.7M444.5 79.2V81.5M449.5 76.0V81.8M450.5 81.3V82.8M452.5 78.9V80.6M454.5 79.9V81.4M457.5 73.1V74.6M458.5 72.2V76.4M460.5 72.9V77.1M462.5 73.4V81.9M465.5 73.4V77.7M468.5 71.9V75.8M469.5 74.6V77.5M470.5 76.5V83.8M471.5 82.2V86.1M473.5 83.8V86.7M475.5 80.6V82.9M477.5 80.0V82.8M478.5 80.1V88.8M479.5 85.7V88.0M481.5 83.8V86.4M483.5 83.0V87.4M486.5 83.4V86.7M487.5 84.7V90.1M488.5 86.2V91.7M489.5 89.3V93.1M490.5 92.3V94.4M492.5 92.6V96.2M493.5 94.8V99.1M495.5 96.0V98.1M497.5 93.5V101.4M502.5 94.8V96.3M504.5 93.3V97.0M508.5 88.2V94.6M510.5 91.5V93.0M511.5 92.1V94.3M512.5 92.4V97.9M513.5 94.5V98.0M515.5 97.3V98.8M517.5 95.7V99.7M520.5 91.6V93.2M523.5 87.6V89.9M524.5 88.9V90.4M525.5 88.1V91.6M526.5 89.4V92.5M527.5 91.6V93.1M529.5 89.5V93.2M530.5 91.7V93.5M531.5 91.9V93.4M532.5 92.7V94.8M534.5 91.4V94.2M536.5 92.2V96.0M537.5 92.7V97.7M538.5 97.5V101.1M539.5 100.8V102.3M540.5 101.1V108.5M542.5 106.4V109.8M546.5 102.0V106.9M547.5 103.6V106.9M549.5 102.9V104.4M554.5 99.4V104.2M556.5 101.1V104.0M558.5 98.9V101.9M559.5 99.7V103.1M560.5 102.3V104.8M561.5 103.8V106.8M562.5 105.9V109.2M567.5 104.6V109.7M569.5 108.2V110.3M571.5 109.5V114.3M575.5 103.1V106.9M576.5 103.8V106.2M579.5 104.0V107.1M580.5 106.8V108.3M583.5 104.8V107.2M584.5 106.8V109.8M585.5 108.4V109.9M588.5 103.3V108.9M589.5 106.3V108.1M594.5 97.4V101.1M595.5 100.2V101.7M597.5 100.2V101.7M599.5 95.0V96.6M601.5 95.0V99.1M602.5 98.3V99.8M614.5 80.0V84.0M616.5 81.8V84.8M618.5 84.0V86.5M619.5 86.2V88.4M621.5 83.6V88.1M622.5 85.8V89.3M626.5 83.1V85.2M627.5 84.5V89.9M628.5 89.1V91.5M629.5 90.5V94.2M634.5 85.4V87.4M636.5 85.1V87.4M641.5 79.5V84.8M642.5 83.9V89.0M643.5 88.4V95.7M644.5 93.7V96.0M647.5 95.4V99.9M650.5 97.1V100.0M653.5 99.3V103.2M657.5 94.8V96.8M658.5 95.5V99.0M660.5 95.6V97.4M662.5 93.0V97.7M663.5 96.0V97.5M665.5 92.2V94.5M666.5 93.4V97.7M667.5 97.4V98.9M668.5 97.7V99.2M669.5 97.1V103.0M670.5 100.1V104.0M672.5 100.9V104.9M676.5 99.2V101.3M677.5 100.6V105.0M679.5 99.7V102.9M680.5 102.8V110.8M681.5 109.9V111.4M687.5 106.6V111.8M688.5 111.2V114.2M689.5 113.1V122.2M690.5 121.3V125.1M694.5 113.2V114.7M695.5 113.8V119.9M697.5 116.2V118.6M698.5 117.7V122.2M699.5 120.7V122.2M700.5 121.8V124.6M701.5 122.9V127.6M702.5 126.2V133.9M707.5 131.2V134.8M715.5 123.7V128.3M716.5 127.4V132.5M717.5 132.0V137.6M718.5 136.7V144.7M720.5 143.6V149.7M733.5 114.6V118.9M734.5 117.5V121.3M735.5 119.4V124.7M738.5 120.4V122.2M739.5 121.8V123.3M740.5 119.6V124.9M741.5 121.5V127.0M742.5 125.0V128.6M744.5 126.8V131.0M745.5 130.0V131.9M746.5 131.5V136.1M747.5 134.7V139.8M749.5 135.7V138.8M752.5 131.8V138.3M754.5 132.6V137.6M756.5 135.1V139.0M757.5 136.1V142.5M763.5 119.4V124.3M766.5 119.9V123.1M767.5 121.1V124.9M768.5 123.6V127.0M769.5 124.4V129.1M771.5 125.9V128.7M774.5 124.3V126.8M777.5 124.2V126.4M782.5 115.9V117.6M786.5 110.1V112.3M796.5 89.2V91.7M799.5 88.5V91.9M802.5 91.6V93.1M804.5 91.3V94.7M806.5 93.3V94.8M810.5 93.5V95.0M811.5 93.5V95.0M814.5 92.7V94.4M817.5 91.2V93.6M819.5 93.1V95.0M822.5 92.0V96.8M823.5 96.8V98.3M826.5 95.1V96.6M828.5 95.9V97.8M836.5 93.9V97.0M837.5 96.4V100.7M839.5 101.4V103.7M840.5 102.7V104.2M843.5 104.3V107.4M848.5 99.1V101.5M860.5 89.7V92.2M861.5 91.0V93.6M862.5 92.3V95.5M867.5 97.2V99.6M872.5 101.1V102.6M889.5 80.8V82.6M894.5 77.3V80.7M906.5 77.4V81.1M910.5 83.2V84.7M927.5 63.6V65.1M932.5 69.9V72.3M947.5 46.7V48.5M949.5 49.9V51.6M951.5 52.3V57.9M952.5 57.8V64.4M953.5 64.0V66.8M956.5 68.0V69.5M957.5 69.2V71.2M958.5 70.4V75.2M966.4 85.0V86.6" stroke="#0a7ae6" stroke-width="1.4" fill="none"/>
<path d="M9.5 132.4V133.9M14.5 132.4V133.9M22.5 129.1V130.6M30.5 147.3V149.6M40.5 127.8V129.9M48.5 127.0V132.5M58.5 116.3V117.8M71.5 114.6V116.1M92.5 135.8V137.9M98.5 129.3V130.8M102.5 127.9V129.7M129.5 164.9V166.4M138.5 157.3V158.8M143.5 152.7V154.2M148.5 144.7V146.8M153.5 150.5V152.0M159.5 140.4V141.9M163.5 141.3V143.4M168.5 139.8V141.8M171.5 144.3V145.8M174.5 145.6V147.1M190.5 130.8V132.3M194.5 131.2V132.7M196.5 134.7V136.2M202.5 139.9V141.8M208.5 137.9V139.4M223.5 127.3V128.8M227.5 128.0V129.5M233.5 137.7V139.5M236.5 137.5V139.0M237.5 138.3V139.8M240.5 140.8V142.3M244.5 139.1V140.6M245.5 139.0V140.7M246.5 139.1V140.6M250.5 147.0V148.5M253.5 146.7V148.9M257.5 148.5V150.0M270.5 140.5V142.0M288.5 133.1V134.6M291.5 131.8V133.5M292.5 133.5V135.3M301.5 124.6V126.6M304.5 127.1V129.2M305.5 127.4V128.9M313.5 116.4V117.9M324.5 122.5V124.3M325.5 122.2V124.4M327.5 123.1V124.6M333.5 129.9V131.4M335.5 130.4V131.9M339.5 128.4V129.9M344.5 132.2V133.7M348.5 134.2V135.7M353.5 135.9V137.4M359.5 136.7V138.2M362.5 135.2V137.3M363.5 135.4V136.9M372.5 137.6V140.6M437.5 81.7V83.2M438.5 80.9V82.7M439.5 79.6V81.7M446.5 79.5V81.0M467.5 72.8V74.3M496.5 96.3V97.8M499.5 96.9V98.5M509.5 90.8V92.3M514.5 95.9V97.6M552.5 99.9V101.4M563.5 108.2V109.7M565.5 104.1V105.8M566.5 104.2V106.0M568.5 107.3V110.1M577.5 105.0V106.5M600.5 94.9V96.4M613.5 82.2V84.4M617.5 84.2V85.7M623.5 88.5V90.5M637.5 85.8V87.4M640.5 79.9V81.9M645.5 95.7V97.6M651.5 98.8V100.3M652.5 98.2V100.4M659.5 96.4V98.4M671.5 101.4V103.6M682.5 110.1V112.2M683.5 111.5V113.0M686.5 105.9V107.9M703.5 145.0V146.5M708.5 133.9V135.4M709.5 132.6V134.5M712.5 126.4V127.9M714.5 123.2V124.7M719.5 142.3V144.1M729.5 122.6V124.3M765.5 121.4V122.9M772.5 128.1V129.6M807.5 92.9V94.4M809.5 92.5V94.4M815.5 92.2V93.9M829.5 97.5V99.2M830.5 98.8V100.3M831.5 99.2V101.3M844.5 106.3V107.8M845.5 105.9V107.4M851.5 97.5V99.0M854.5 94.1V95.6M863.5 95.0V97.0M865.5 96.8V98.3M866.5 96.7V98.2M869.5 100.9V102.5M870.5 101.0V102.5M871.5 101.7V103.2M873.5 100.8V102.5M875.5 98.7V100.2M876.5 98.4V100.0M877.5 99.9V101.4M879.5 96.6V98.1M883.5 87.9V89.4M887.5 82.8V84.5M892.5 74.1V75.6M896.5 79.1V80.6M897.5 79.2V80.7M898.5 79.2V81.1M901.5 77.4V78.9M903.5 75.2V76.7M907.5 80.3V82.4M909.5 83.0V84.5M915.5 74.1V75.6M916.5 73.5V75.0M919.5 69.0V70.5M923.5 68.4V69.9M929.5 66.8V68.3M936.5 65.3V66.8M943.5 51.4V52.9M946.5 46.1V47.6M948.5 48.4V49.9M950.5 51.6V53.1M954.5 65.6V67.3M955.5 66.2V68.0M959.5 74.7V76.2M960.5 75.7V77.2M963.5 71.9V73.4M964.5 70.3V71.9M965.5 70.0V71.5M968.7 62.8V64.4" stroke="#e6d65a" stroke-width="1.4" fill="none"/>
</g>
<g>
<path d="M156.0 334.5V337.1M158.3 331.8V334.5M159.2 329.2V331.8M161.5 329.2V331.8M165.6 331.8V334.5M173.1 329.2V331.8M176.7 329.2V331.8M178.5 313.5V329.2M181.7 305.7V308.3M184.0 297.9V305.7M188.0 300.5V303.1M190.9 295.2V297.9M192.7 292.6V300.5M212.8 284.8V295.2M214.2 276.9V284.8M245.9 297.9V305.7M264.2 297.9V303.1M265.1 295.2V297.9M266.5 292.6V295.2M267.4 287.4V295.2M275.6 297.9V300.5M277.4 292.6V297.9M282.6 279.5V290.0M284.0 276.9V284.8M286.0 276.9V279.5M288.3 271.7V279.5M294.9 269.1V276.9M304.6 271.7V276.9M308.3 271.7V274.3M315.3 269.1V271.7M316.4 269.1V271.7M317.8 269.1V271.7M329.1 276.9V282.2M332.7 287.4V290.0M337.3 284.8V292.6M339.6 279.5V284.8M354.2 300.5V305.7M357.6 297.9V300.5M364.0 292.6V300.5M364.9 287.4V295.2M366.0 284.8V290.0M381.2 321.4V329.2M385.1 321.4V324.0M391.2 308.3V310.9M392.3 305.7V310.9M393.4 303.1V305.7M395.4 292.6V297.9M396.8 276.9V292.6M397.9 263.9V276.9M399.3 256.0V266.5M402.5 248.2V256.0M403.4 242.9V248.2M418.1 290.0V292.6M419.5 287.4V292.6M421.5 274.3V279.5M422.9 266.5V276.9M436.6 282.2V287.4M442.9 282.2V290.0M448.3 282.2V284.8" stroke="#ff0000" stroke-width="1.1" fill="none"/>
<path d="M7.2 313.9V323.0M13.0 303.0V326.6M14.1 292.2V299.4M27.2 301.2V319.3M29.0 308.5V321.2M33.5 290.4V296.7M37.1 281.3V294.9M38.4 269.5V281.3M43.5 303.0V310.3M54.0 282.2V292.2M55.3 282.2V286.7M56.5 274.1V278.6M60.7 275.9V283.1M66.1 293.1V294.3M67.0 275.9V286.7M69.7 272.2V275.9M73.4 278.6V280.4M92.8 311.2V314.8M102.4 293.1V300.3M108.3 303.4V304.5M121.0 352.0V361.0M138.6 346.5V352.0M139.5 339.3V342.0M151.8 329.3V332.9M464.5 266.3V269.0M485.9 278.9V284.4M487.0 266.3V273.5M490.8 294.3V297.6M498.9 308.8V309.9M519.7 303.0V311.0M522.1 297.6V300.7M553.3 284.4V289.8M596.4 295.3V297.1M606.3 297.1V305.3M612.3 294.8V299.9M618.5 300.8V308.0M632.6 294.8V299.9M654.9 310.7V315.3M660.1 289.9V297.1M662.9 274.5V284.5M675.7 279.0V294.4M677.5 289.9V294.4M683.7 297.5V302.6M688.4 284.5V308.0M706.5 316.2V318.3M719.2 337.0V344.2M723.2 327.0V331.6M724.6 315.8V323.4M729.2 311.1V315.3M732.8 311.1V315.3M736.2 300.8V308.0M760.0 313.6V315.6M763.9 300.7V302.6M770.9 292.7V296.7M807.8 274.4V276.8M810.4 282.7V284.7M815.7 274.4V276.8M820.1 279.1V282.7M825.7 271.8V278.7M826.7 268.8V271.8M839.6 276.8V282.7M850.6 250.9V257.8M859.6 245.3V249.9M887.6 239.8V245.2M890.9 227.3V239.8M903.0 227.3V229.5M942.2 221.8V224.8M944.9 221.3V224.8M947.9 213.7V219.1M951.2 221.8V224.8M962.3 232.2V234.9" stroke="#ff0000" stroke-width="1.3" fill="none"/>
<path d="M153.3 331.8V334.5M163.8 329.2V334.5M169.0 329.2V331.8M170.4 331.8V334.5M185.1 297.9V300.5M194.5 292.6V295.2M217.2 274.3V284.8M250.8 300.5V305.7M269.2 290.0V292.6M271.0 292.6V295.2M273.3 295.2V297.9M274.2 292.6V300.5M285.1 274.3V279.5M291.7 263.9V271.7M301.4 269.1V274.3M302.8 271.7V276.9M314.4 269.1V271.7M322.1 271.7V274.3M325.7 274.3V279.5M326.8 276.9V284.8M330.9 279.5V290.0M333.6 290.0V292.6M341.0 282.2V284.8M342.1 282.2V287.4M343.2 284.8V287.4M347.8 292.6V305.7M348.7 305.7V308.3M352.8 300.5V305.7M359.0 292.6V300.5M360.8 297.9V300.5M371.9 292.6V308.3M376.0 305.7V321.4M377.1 318.8V321.4M379.4 326.6V334.5M405.7 242.9V253.4M407.5 250.8V258.6M410.2 256.0V266.5M411.3 266.5V271.7M414.7 282.2V287.4M416.1 287.4V292.6M445.9 282.2V284.8" stroke="#0a7ae6" stroke-width="1.1" fill="none"/>
<path d="M15.9 287.6V289.5M25.0 301.2V317.5M35.3 290.4V295.8M44.0 303.9V309.4M59.4 274.1V288.6M61.6 284.9V292.2M63.0 290.4V302.1M68.5 272.2V281.3M71.6 281.3V286.7M79.3 288.6V294.0M86.1 297.6V299.4M87.3 303.0V308.5M88.8 309.4V314.8M94.2 303.9V312.1M100.5 300.3V303.9M104.2 297.6V301.2M110.1 311.2V315.7M113.2 323.0V330.2M116.8 333.8V337.5M117.8 337.5V350.1M118.7 350.1V357.4M119.6 355.6V361.0M129.0 347.4V351.1M130.4 350.1V354.7M136.8 347.4V351.1M138.0 345.6V354.7M141.3 332.0V336.6M144.9 338.4V341.1M148.6 327.5V332.9M153.6 332.0V335.7M450.9 290.7V292.5M470.8 282.6V289.8M472.1 282.6V284.4M487.7 271.7V285.3M488.4 282.6V286.7M489.1 290.7V295.3M494.9 303.0V307.9M495.8 311.0V318.8M512.0 303.0V305.2M516.7 313.4V318.8M561.4 297.6V302.5M589.1 308.5V310.7M594.6 303.0V305.2M600.9 297.1V299.9M607.2 306.2V308.9M617.2 297.1V300.8M619.0 302.6V305.3M620.3 295.3V298.9M622.6 305.3V312.5M626.8 297.1V302.6M635.3 291.2V292.6M642.6 303.1V305.3M643.5 311.1V315.3M660.7 290.8V296.2M680.6 294.8V305.3M681.2 308.0V310.4M689.7 294.8V305.3M698.7 308.6V310.7M702.9 315.8V326.1M711.4 316.2V328.8M714.1 313.4V315.3M715.9 323.8V328.8M717.8 333.4V346.1M719.9 337.9V343.3M724.1 332.1V333.9M727.7 313.4V315.3M737.3 303.5V315.3M741.3 318.9V323.4M751.6 305.6V308.6M754.4 313.6V315.6M757.6 318.6V320.6M768.5 284.3V297.1M779.9 284.7V287.7M780.9 287.1V289.7M830.7 276.8V281.7M844.0 266.8V268.4M884.3 247.9V250.1M891.6 225.1V227.3M946.5 214.2V221.3M965.7 245.2V253.4M967.5 245.2V247.4M968.6 243.3V245.8" stroke="#0a7ae6" stroke-width="1.3" fill="none"/>
<path d="M41.7 293.1V313.0M58.0 288.6V292.2M81.2 296.7V300.3M97.8 304.9V310.3M114.1 330.2V332.9M121.7 352.9V360.1M122.8 353.8V362.8M149.5 328.4V332.0M150.4 334.7V337.5M504.0 315.2V319.7M691.5 292.6V297.5M757.0 311.0V316.6M806.8 276.8V281.7M840.6 268.8V274.8M841.2 261.2V268.4M927.8 217.0V221.8" stroke="#e6d65a" stroke-width="1.3" fill="none"/>
<path d="M151.0 331.3V332.3M155.1 334.0V335.0M164.7 334.0V335.0M167.9 328.7V329.7M172.2 328.7V329.7M174.5 328.7V329.7M175.6 328.7V329.7M180.8 307.8V308.8M186.2 300.0V301.0M189.8 297.4V298.4M195.6 297.4V298.4M197.0 302.6V303.6M200.0 305.2V306.2M202.4 302.6V303.6M205.4 302.6V303.6M206.8 300.0V301.0M209.8 292.1V293.1M219.1 281.7V282.7M221.0 281.7V282.7M222.4 289.5V290.5M225.4 284.3V285.3M226.8 284.3V285.3M229.2 286.9V287.9M231.6 297.4V298.4M234.0 307.8V308.8M235.4 310.4V311.4M236.8 305.2V306.2M239.8 307.8V308.8M241.2 305.2V306.2M243.1 300.0V301.0M244.5 297.4V298.4M247.8 300.0V301.0M252.7 307.8V308.8M254.1 302.6V303.6M255.5 305.2V306.2M257.4 302.6V303.6M259.3 300.0V301.0M261.2 305.2V306.2M279.7 292.1V293.1M281.5 284.3V285.3M289.2 268.6V269.6M290.3 268.6V269.6M293.1 276.4V277.4M296.3 271.2V272.2M297.7 266.0V267.0M299.1 271.2V272.2M306.0 271.2V272.2M309.4 268.6V269.6M311.7 263.4V264.4M313.5 268.6V269.6M318.9 268.6V269.6M319.8 271.2V272.2M323.9 276.4V277.4M328.2 279.0V280.0M335.9 289.5V290.5M338.7 281.7V282.7M345.5 292.1V293.1M349.6 307.8V308.8M351.4 302.6V303.6M356.5 297.4V298.4M362.6 297.4V298.4M367.4 286.9V287.9M368.5 289.5V290.5M369.6 292.1V293.1M374.2 310.4V311.4M378.5 328.7V329.7M380.3 328.7V329.7M382.3 320.9V321.9M383.7 320.9V321.9M386.5 318.3V319.3M388.3 315.7V316.7M389.4 310.4V311.4M394.3 297.4V298.4M400.7 252.9V253.9M409.3 255.5V256.5M412.2 276.4V277.4M413.6 284.3V285.3M417.2 292.1V293.1M420.6 279.0V280.0M425.2 263.4V264.4M427.1 266.0V267.0M429.5 263.4V264.4M431.4 271.2V272.2M433.3 279.0V280.0M435.2 284.3V285.3M438.5 286.9V287.9M441.5 286.9V287.9M9.1 315.2V316.2M11.8 320.7V321.7M23.6 297.1V298.1M30.8 311.6V312.6M32.6 313.4V314.4M40.2 268.1V269.1M45.3 309.8V310.8M46.7 307.1V308.1M48.2 304.7V305.7M49.6 302.2V303.2M51.1 299.8V300.8M52.5 297.1V298.1M75.2 286.2V287.2M77.9 287.1V288.1M85.1 297.1V298.1M90.6 311.6V312.6M96.0 302.5V303.5M99.3 307.1V308.1M105.4 300.7V301.7M111.4 317.9V318.9M115.9 328.8V329.8M124.1 356.9V357.9M125.9 355.1V356.1M132.2 355.1V356.1M135.0 342.4V343.4M143.1 337.0V338.0M146.7 336.1V337.1M155.8 336.1V337.1M158.5 327.9V328.9M451.8 292.4V293.4M455.8 289.9V290.9M456.9 278.4V279.4M457.6 275.7V276.7M459.4 271.7V272.7M460.5 266.3V267.3M461.8 268.5V269.5M463.6 267.6V268.6M469.9 282.1V283.1M471.7 290.2V291.2M476.8 282.1V283.1M484.1 284.4V285.4M493.5 295.7V296.7M497.5 310.5V311.5M500.4 312.9V313.9M502.5 312.9V313.9M505.3 323.2V324.2M507.6 321.0V322.0M505.3 326.8V327.8M510.7 310.5V311.5M513.0 308.3V309.3M515.6 310.5V311.5M518.5 312.9V313.9M518.5 318.7V319.7M521.0 302.5V303.5M523.4 300.2V301.2M525.2 289.9V290.9M527.9 294.8V295.8M527.0 297.5V298.5M528.8 300.2V301.2M530.1 305.1V306.1M535.5 297.1V298.1M538.4 308.3V309.3M541.5 308.3V309.3M543.3 308.3V309.3M544.2 300.2V301.2M546.4 305.1V306.1M551.8 294.8V295.8M556.0 292.4V293.4M560.1 294.8V295.8M562.3 308.3V309.3M571.7 305.1V306.1M573.6 305.1V306.1M573.2 308.3V309.3M576.8 305.1V306.1M580.1 300.2V301.2M580.8 305.1V306.1M582.6 302.5V303.5M585.0 300.2V301.2M587.7 302.5V303.5M590.4 305.1V306.1M592.8 300.2V301.2M598.6 294.8V295.8M600.9 302.6V303.6M603.6 311.1V312.1M608.7 308.1V309.1M608.2 310.6V311.6M610.5 304.8V305.8M614.1 296.6V297.6M621.4 302.6V303.6M623.9 307.5V308.5M625.4 302.6V303.6M627.5 304.8V305.8M628.6 310.6V311.6M631.7 300.3V301.3M634.1 289.9V290.9M638.9 300.3V301.3M641.3 297.0V298.0M646.2 310.6V311.6M647.1 308.1V309.1M648.0 302.6V303.6M649.3 300.3V301.3M651.6 310.6V311.6M655.8 308.1V309.1M658.0 300.3V301.3M658.9 292.1V293.1M661.6 286.7V287.7M663.8 278.5V279.5M679.7 284.0V285.0M686.6 304.8V305.8M687.9 308.1V309.1M696.4 297.0V298.0M696.0 308.1V309.1M700.5 310.6V311.6M701.8 312.9V313.9M705.1 315.7V316.7M708.7 315.3V316.3M710.5 318.4V319.4M713.2 321.1V322.1M716.8 331.1V332.1M720.5 333.8V334.8M722.3 336.5V337.5M726.8 318.4V319.4M734.1 308.1V309.1M735.5 315.7V316.7M739.5 310.6V311.6M742.2 310.6V311.6M742.2 315.3V316.3M744.9 323.3V324.3M747.6 323.3V324.3M751.6 309.1V310.1M753.6 311.1V312.1M753.0 318.5V319.5M761.6 308.1V309.1M762.4 305.1V306.1M767.5 297.2V298.2M769.5 302.5V303.5M773.5 289.8V290.8M782.9 284.2V285.2M784.3 284.2V285.2M785.5 287.2V288.2M786.9 289.8V290.8M788.8 286.6V287.6M798.4 276.3V277.3M801.8 281.8V282.8M805.4 281.8V282.8M812.7 278.6V279.6M816.7 278.6V279.6M818.1 281.8V282.8M821.3 276.3V277.3M823.7 284.2V285.2M824.7 281.8V282.8M829.1 268.3V269.3M831.7 271.3V272.3M836.3 273.9V274.9M838.0 284.2V285.2M846.6 263.3V264.3M848.6 257.9V258.9M849.2 260.7V261.7M854.6 247.4V248.4M856.0 244.8V245.8M857.6 250.4V251.4M860.6 250.4V251.4M863.1 253.3V254.3M865.1 247.4V248.4M867.5 253.3V254.3M869.5 253.3V254.3M871.5 253.3V254.3M873.1 255.7V256.7M880.5 255.7V256.7M880.5 255.6V256.6M884.9 253.4V254.4M886.7 247.8V248.8M889.2 242.8V243.8M893.3 227.1V228.1M896.8 229.5V230.5M896.1 231.9V232.9M904.8 231.9V232.9M908.5 234.9V235.9M912.6 231.9V232.9M917.5 227.1V228.1M918.9 227.1V228.1M923.7 224.6V225.6M925.4 221.3V222.3M930.0 224.6V225.6M931.6 231.9V232.9M943.6 221.3V222.3M949.6 213.2V214.2M950.1 216.5V217.5M947.4 224.6V225.6M953.4 231.9V232.9M955.0 231.9V232.9M956.3 231.9V232.9M952.0 234.9V235.9M953.9 237.1V238.1M958.5 239.8V240.8M963.2 234.9V235.9M963.9 239.8V240.8M960.1 247.8V248.8" stroke="#e6d65a" stroke-width="1.8" fill="none"/>
</g>
<path d="M6.9 482.0 L7.7 480.4 L8.5 479.7 L9.3 478.0 L10.1 477.9 L10.9 478.7 L11.7 480.4 L12.5 482.8 L13.3 483.7 L14.1 481.3 L14.9 482.6 L15.7 484.0 L16.5 488.6 L17.3 487.8 L18.1 490.0 L18.9 494.3 L19.7 492.0 L20.5 485.7 L21.3 482.6 L22.1 480.0 L22.9 478.0 L23.7 483.4 L24.5 484.7 L25.3 483.7 L26.1 489.3 L26.9 488.0 L27.7 491.7 L28.5 496.1 L29.3 496.5 L30.1 503.6 L30.9 502.2 L31.7 501.9 L32.5 498.6 L33.3 499.4 L34.1 493.1 L34.9 489.3 L35.7 491.2 L36.5 486.3 L37.3 486.5 L38.1 486.5 L38.9 484.8 L39.7 482.9 L40.5 489.1 L41.3 491.7 L42.1 471.3 L42.9 472.0 L43.7 470.2 L44.5 471.7 L45.3 474.8 L46.1 473.2 L46.9 473.1 L47.7 476.8 L48.5 475.3 L49.3 476.5 L50.1 472.5 L50.9 475.3 L51.7 472.9 L52.5 472.5 L53.3 474.7 L54.1 469.2 L54.9 464.4 L55.7 464.2 L56.5 465.3 L57.3 468.9 L58.1 469.0 L58.9 468.0 L59.7 467.4 L60.5 471.2 L61.3 475.6 L62.1 476.5 L62.9 473.7 L63.7 474.0 L64.5 467.4 L65.3 464.2 L66.1 463.7 L66.9 461.6 L67.7 459.4 L68.5 462.2 L69.3 460.0 L70.1 465.3 L70.9 467.2 L71.7 469.2 L72.5 469.1 L73.3 470.1 L74.1 466.9 L74.9 471.5 L75.7 472.2 L76.5 474.4 L77.3 476.4 L78.1 473.1 L78.9 473.9 L79.7 476.2 L80.5 471.2 L81.3 475.8 L82.1 476.6 L82.9 475.8 L83.7 474.5 L84.5 474.9 L85.3 474.1 L86.1 472.7 L86.9 475.8 L87.7 479.1 L88.5 482.0 L89.3 482.5 L90.1 484.3 L90.9 487.3 L91.7 480.9 L92.5 485.3 L93.3 484.1 L94.1 482.8 L94.9 481.0 L95.7 480.3 L96.5 479.9 L97.3 479.3 L98.1 478.0 L98.9 480.0 L99.7 477.7 L100.5 478.4 L101.3 477.6 L102.1 477.4 L102.9 481.0 L103.7 481.3 L104.5 481.0 L105.3 484.0 L106.1 484.7 L106.9 490.8 L107.7 493.6 L108.5 500.0 L109.3 502.9 L110.1 509.5 L110.9 511.2 L111.7 515.4 L112.5 519.5 L113.3 519.8 L114.1 520.1 L114.9 519.6 L115.7 522.6 L116.5 520.9 L117.3 515.6 L118.1 514.8 L118.9 513.4 L119.7 516.4 L120.5 512.2 L121.3 512.9 L122.1 515.3 L122.9 516.5 L123.7 520.3 L124.5 526.5 L125.3 522.2 L126.1 517.5 L126.9 515.5 L127.7 514.8 L128.5 513.4 L129.3 514.3 L130.1 508.3 L130.9 510.2 L131.7 506.4 L132.5 507.5 L133.3 505.8 L134.1 508.2 L134.9 513.2 L135.7 508.2 L136.5 504.8 L137.3 502.5 L138.1 502.4 L138.9 502.8 L139.7 502.3 L140.5 501.4 L141.3 497.7 L142.1 498.6 L142.9 500.7 L143.7 499.9 L144.5 498.2 L145.3 496.8 L146.1 494.9 L146.9 494.6 L147.7 493.1 L148.5 492.7 L149.3 490.7 L150.1 492.7 L150.9 493.3 L151.7 491.7 L152.5 490.8 L153.3 494.5 L154.1 497.7 L154.9 500.3 L155.7 498.6 L156.5 494.8 L157.3 487.7 L158.1 487.4 L158.9 482.0 L159.7 482.9 L160.5 483.2 L161.3 485.7 L162.1 487.5 L162.9 484.6 L163.7 483.9 L164.5 483.0 L165.3 483.4 L166.1 484.4 L166.9 488.5 L167.7 483.3 L168.5 484.2 L169.3 484.6 L170.1 487.3 L170.9 487.4 L171.7 490.1 L172.5 489.1 L173.3 494.5 L174.1 492.7 L174.9 490.7 L175.7 493.9 L176.5 491.1 L177.3 488.8 L178.1 487.9 L178.9 484.3 L179.7 485.0 L180.5 482.4 L181.3 483.8 L182.1 482.3 L182.9 483.1 L183.7 483.7 L184.5 483.1 L185.3 482.6 L186.1 483.3 L186.9 483.0 L187.7 480.8 L188.5 483.7 L189.3 482.7 L190.1 478.6 L190.9 481.4 L191.7 480.5 L192.5 481.5 L193.3 480.8 L194.1 484.7 L194.9 482.0 L195.7 484.0 L196.5 484.5 L197.3 489.4 L198.1 489.7 L198.9 487.5 L199.7 489.9 L200.5 492.4 L201.3 492.8 L202.1 492.7 L202.9 490.3 L203.7 491.3 L204.5 490.1 L205.3 493.2 L206.1 494.3 L206.9 489.6 L207.7 491.7 L208.5 489.6 L209.3 487.8 L210.1 487.9 L210.9 486.2 L211.7 485.7 L212.5 484.5 L213.3 479.7 L214.1 476.0 L214.9 477.4 L215.7 480.5 L216.5 484.4 L217.3 483.5 L218.1 483.7 L218.9 481.6 L219.7 482.9 L220.5 483.3 L221.3 480.1 L222.1 481.1 L222.9 478.6 L223.7 480.1 L224.5 481.4 L225.3 480.5 L226.1 480.4 L226.9 478.4 L227.7 478.3 L228.5 481.9 L229.3 483.9 L230.1 486.5 L230.9 484.3 L231.7 489.3 L232.5 489.8 L233.3 489.9 L234.1 486.9 L234.9 485.6 L235.7 485.8 L236.5 488.5 L237.3 488.5 L238.1 491.5 L238.9 494.2 L239.7 492.6 L240.5 493.3 L241.3 495.6 L242.1 491.0 L242.9 492.2 L243.7 492.7 L244.5 492.3 L245.3 491.1 L246.1 488.3 L246.9 492.8 L247.7 491.3 L248.5 494.3 L249.3 495.4 L250.1 495.9 L250.9 498.7 L251.7 499.2 L252.5 499.3 L253.3 501.8 L254.1 501.8 L254.9 499.7 L255.7 499.9 L256.5 500.9 L257.3 504.0 L258.1 501.6 L258.9 502.8 L259.7 502.7 L260.5 503.3 L261.3 502.0 L262.1 502.6 L262.9 499.4 L263.7 499.4 L264.5 495.6 L265.3 496.9 L266.1 499.8 L266.9 496.7 L267.7 496.5 L268.5 497.2 L269.3 497.6 L270.1 495.3 L270.9 495.3 L271.7 495.1 L272.5 495.1 L273.3 493.3 L274.1 495.9 L274.9 497.6 L275.7 496.4 L276.5 496.5 L277.3 495.3 L278.1 496.3 L278.9 495.1 L279.7 491.1 L280.5 488.3 L281.3 487.2 L282.1 485.2 L282.9 485.4 L283.7 486.8 L284.5 485.1 L285.3 485.1 L286.1 485.7 L286.9 487.3 L287.7 489.2 L288.5 489.0 L289.3 489.0 L290.1 487.4 L290.9 490.1 L291.7 491.1 L292.5 488.5 L293.3 482.0 L294.1 486.2 L294.9 485.1 L295.7 482.6 L296.5 481.2 L297.3 479.9 L298.1 480.4 L298.9 482.2 L299.7 481.4 L300.5 480.4 L301.3 483.6 L302.1 482.4 L302.9 484.3 L303.7 482.8 L304.5 480.1 L305.3 484.9 L306.1 481.0 L306.9 480.8 L307.7 480.7 L308.5 476.4 L309.3 471.2 L310.1 471.8 L310.9 469.0 L311.7 473.0 L312.5 473.8 L313.3 471.2 L314.1 472.2 L314.9 473.1 L315.7 474.5 L316.5 473.4 L317.3 471.3 L318.1 468.8 L318.9 467.5 L319.7 469.1 L320.5 470.7 L321.3 474.4 L322.1 474.7 L322.9 475.5 L323.7 474.5 L324.5 478.3 L325.3 476.4 L326.1 476.9 L326.9 476.3 L327.7 476.9 L328.5 478.7 L329.3 476.2 L330.1 479.7 L330.9 481.3 L331.7 479.9 L332.5 477.2 L333.3 479.6 L334.1 481.7 L334.9 479.5 L335.7 479.1 L336.5 481.6 L337.3 479.7 L338.1 478.9 L338.9 482.4 L339.7 481.4 L340.5 483.3 L341.3 483.2 L342.1 483.7 L342.9 485.2 L343.7 483.9 L344.5 482.7 L345.3 483.3 L346.1 484.5 L346.9 483.5 L347.7 485.5 L348.5 484.4 L349.3 485.9 L350.1 484.9 L350.9 484.8 L351.7 487.0 L352.5 486.3 L353.3 489.6 L354.1 487.1 L354.9 486.6 L355.7 483.7 L356.5 485.4 L357.3 487.8 L358.1 487.0 L358.9 485.7 L359.7 486.3 L360.5 487.0 L361.3 486.2 L362.1 485.5 L362.9 484.9 L363.7 484.3 L364.5 486.5 L365.3 484.9 L366.1 486.3 L366.9 487.8 L367.7 487.4 L368.5 488.3 L369.3 487.8 L370.1 487.9 L370.9 492.5 L371.7 490.1 L372.5 487.7 L373.3 450.1 L374.1 452.5 L374.9 457.8 L375.7 456.8 L376.5 458.9 L377.3 459.5 L378.1 456.5 L378.9 456.5 L379.7 453.1 L380.5 454.9 L381.3 449.8 L382.1 449.9 L382.9 446.5 L383.7 443.8 L384.5 441.7 L385.3 437.6 L386.1 434.0 L386.9 433.6 L387.7 430.0 L388.5 426.0 L389.3 430.6 L390.1 432.9 L390.9 430.2 L391.7 427.8 L392.5 428.2 L393.3 429.1 L394.1 425.7 L394.9 421.9 L395.7 417.0 L396.5 414.1 L397.3 412.3 L398.1 409.2 L398.9 409.6 L399.7 411.4 L400.5 411.5 L401.3 408.7 L402.1 406.7 L402.9 402.7 L403.7 400.8 L404.5 398.2 L405.3 400.2 L406.1 404.0 L406.9 409.0 L407.7 411.3 L408.5 412.8 L409.3 411.6 L410.1 412.1 L410.9 415.4 L411.7 418.2 L412.5 417.9 L413.3 420.8 L414.1 427.7 L414.9 425.1 L415.7 423.9 L416.5 423.1 L417.3 424.6 L418.1 423.6 L418.9 421.2 L419.7 417.9 L420.5 420.9 L421.3 424.1 L422.1 423.8 L422.9 420.2 L423.7 424.6 L424.5 427.7 L425.3 429.6 L426.1 428.5 L426.9 425.9 L427.7 427.8 L428.5 423.0 L429.3 425.0 L430.1 420.0 L430.9 420.5 L431.7 425.1 L432.5 423.2 L433.3 423.0 L434.1 425.2 L434.9 422.9 L435.7 423.2 L436.5 420.7 L437.3 423.5 L438.1 420.8 L438.9 419.8 L439.7 422.2 L440.5 422.3 L441.3 421.2 L442.1 418.5 L442.9 419.2 L443.7 418.3 L444.5 416.3 L445.3 415.2 L446.1 414.2 L446.9 412.4 L447.7 412.5 L448.5 417.0 L449.3 418.4 L450.1 419.9 L450.9 418.2 L451.7 417.0 L452.5 418.4 L453.3 417.2 L454.1 416.2 L454.9 416.5 L455.7 413.4 L456.5 410.7 L457.3 411.1 L458.1 412.6 L458.9 416.2 L459.7 417.4 L460.5 416.6 L461.3 420.6 L462.1 420.5 L462.9 421.7 L463.7 418.5 L464.5 416.8 L465.3 413.9 L466.1 418.8 L466.9 415.6 L467.7 416.5 L468.5 414.2 L469.3 417.8 L470.1 418.4 L470.9 421.8 L471.7 425.9 L472.5 424.9 L473.3 420.9 L474.1 423.1 L474.9 418.6 L475.7 419.0 L476.5 421.1 L477.3 421.5 L478.1 423.6 L478.9 425.3 L479.7 427.4 L480.5 429.3 L481.3 429.1 L482.1 425.7 L482.9 427.0 L483.7 424.3 L484.5 429.1 L485.3 427.2 L486.1 429.4 L486.9 429.0 L487.7 430.1 L488.5 429.8 L489.3 432.7 L490.1 435.6 L490.9 432.7 L491.7 432.2 L492.5 435.4 L493.3 439.5 L494.1 436.1 L494.9 432.3 L495.7 429.8 L496.5 431.7 L497.3 435.2 L498.1 436.0 L498.9 435.0 L499.7 434.2 L500.5 433.7 L501.3 432.3 L502.1 429.4 L502.9 431.3 L503.7 427.2 L504.5 428.4 L505.3 427.6 L506.1 426.7 L506.9 423.6 L507.7 424.2 L508.5 421.9 L509.3 421.4 L510.1 422.6 L510.9 424.6 L511.7 427.5 L512.5 428.3 L513.3 431.8 L514.1 433.2 L514.9 434.7 L515.7 430.3 L516.5 430.7 L517.3 429.7 L518.1 428.8 L518.9 431.1 L519.7 426.5 L520.5 425.8 L521.3 425.6 L522.1 426.6 L522.9 424.2 L523.7 425.1 L524.5 425.6 L525.3 425.2 L526.1 423.8 L526.9 426.0 L527.7 425.9 L528.5 430.3 L529.3 427.9 L530.1 428.0 L530.9 430.3 L531.7 430.3 L532.5 428.7 L533.3 430.7 L534.1 429.8 L534.9 429.5 L535.7 429.0 L536.5 430.9 L537.3 432.7 L538.1 438.4 L538.9 439.6 L539.7 439.1 L540.5 442.0 L541.3 447.0 L542.1 445.1 L542.9 446.5 L543.7 446.1 L544.5 442.7 L545.3 443.5 L546.1 445.6 L546.9 444.1 L547.7 445.0 L548.5 443.8 L549.3 444.2 L550.1 442.2 L550.9 438.4 L551.7 442.2 L552.5 439.0 L553.3 443.9 L554.1 444.7 L554.9 445.0 L555.7 448.4 L556.5 449.1 L557.3 446.1 L558.1 445.1 L558.9 441.6 L559.7 442.4 L560.5 444.8 L561.3 448.3 L562.1 447.5 L562.9 446.4 L563.7 445.5 L564.5 445.0 L565.3 444.9 L566.1 444.5 L566.9 441.7 L567.7 446.4 L568.5 445.2 L569.3 444.2 L570.1 449.7 L570.9 449.1 L571.7 452.8 L572.5 453.9 L573.3 450.0 L574.1 448.3 L574.9 443.6 L575.7 441.8 L576.5 441.8 L577.3 443.7 L578.1 443.9 L578.9 446.5 L579.7 448.0 L580.5 447.2 L581.3 447.0 L582.1 445.9 L582.9 450.1 L583.7 450.7 L584.5 452.9 L585.3 446.5 L586.1 448.6 L586.9 447.8 L587.7 449.3 L588.5 446.2 L589.3 446.7 L590.1 449.8 L590.9 445.2 L591.7 436.8 L592.5 438.5 L593.3 439.3 L594.1 435.9 L594.9 438.3 L595.7 438.5 L596.5 437.6 L597.3 439.8 L598.1 441.1 L598.9 438.4 L599.7 434.0 L600.5 436.0 L601.3 433.8 L602.1 435.7 L602.9 435.9 L603.7 434.4 L604.5 436.0 L605.3 433.8 L606.1 426.8 L606.9 427.3 L607.7 426.6 L608.5 425.1 L609.3 422.5 L610.1 420.7 L610.9 417.9 L611.7 421.5 L612.5 420.6 L613.3 421.0 L614.1 420.5 L614.9 420.3 L615.7 419.2 L616.5 418.1 L617.3 420.0 L618.1 424.5 L618.9 425.0 L619.7 423.2 L620.5 425.0 L621.3 421.5 L622.1 422.7 L622.9 421.0 L623.7 422.2 L624.5 421.7 L625.3 417.6 L626.1 420.9 L626.9 421.6 L627.7 422.6 L628.5 425.8 L629.3 426.5 L630.1 431.9 L630.9 429.3 L631.7 426.1 L632.5 425.7 L633.3 422.9 L634.1 426.5 L634.9 424.3 L635.7 420.2 L636.5 423.1 L637.3 423.5 L638.1 422.0 L638.9 416.0 L639.7 416.3 L640.5 413.5 L641.3 415.2 L642.1 420.0 L642.9 427.0 L643.7 428.0 L644.5 426.9 L645.3 425.8 L646.1 427.0 L646.9 435.7 L647.7 439.4 L648.5 435.8 L649.3 435.3 L650.1 436.8 L650.9 433.9 L651.7 437.8 L652.5 441.5 L653.3 438.9 L654.1 436.9 L654.9 439.7 L655.7 436.4 L656.5 436.1 L657.3 434.9 L658.1 436.0 L658.9 433.7 L659.7 434.7 L660.5 435.2 L661.3 439.0 L662.1 438.3 L662.9 440.6 L663.7 437.2 L664.5 438.8 L665.3 441.2 L666.1 437.9 L666.9 438.1 L667.7 441.1 L668.5 443.0 L669.3 444.6 L670.1 448.3 L670.9 451.6 L671.7 454.4 L672.5 452.4 L673.3 450.2 L674.1 446.0 L674.9 442.5 L675.7 449.1 L676.5 449.9 L677.3 447.0 L678.1 444.4 L678.9 447.7 L679.7 449.5 L680.5 450.4 L681.3 449.5 L682.1 452.1 L682.9 451.7 L683.7 454.0 L684.5 453.7 L685.3 451.9 L686.1 449.3 L686.9 451.4 L687.7 450.0 L688.5 460.4 L689.3 469.4 L690.1 466.7 L690.9 468.8 L691.7 472.7 L692.5 463.8 L693.3 461.5 L694.1 462.5 L694.9 462.1 L695.7 460.4 L696.5 462.5 L697.3 469.1 L698.1 468.4 L698.9 464.1 L699.7 465.5 L700.5 471.7 L701.3 477.6 L702.1 482.2 L702.9 485.4 L703.7 487.2 L704.5 482.9 L705.3 479.6 L706.1 479.6 L706.9 480.7 L707.7 480.6 L708.5 477.6 L709.3 476.6 L710.1 474.9 L710.9 474.3 L711.7 468.0 L712.5 465.9 L713.3 467.9 L714.1 468.4 L714.9 468.9 L715.7 473.1 L716.5 476.8 L717.3 476.7 L718.1 481.7 L718.9 485.4 L719.7 488.8 L720.5 493.7 L721.3 493.7 L722.1 487.9 L722.9 489.0 L723.7 486.3 L724.5 482.6 L725.3 483.2 L726.1 481.3 L726.9 477.0 L727.7 471.3 L728.5 469.4 L729.3 464.7 L730.1 462.1 L730.9 461.5 L731.7 458.2 L732.5 457.8 L733.3 458.4 L734.1 458.4 L734.9 464.7 L735.7 465.6 L736.5 466.2 L737.3 463.3 L738.1 464.4 L738.9 462.2 L739.7 465.1 L740.5 466.4 L741.3 470.9 L742.1 471.4 L742.9 473.7 L743.7 472.4 L744.5 475.5 L745.3 481.9 L746.1 483.4 L746.9 487.7 L747.7 486.1 L748.5 488.2 L749.3 486.3 L750.1 485.5 L750.9 482.4 L751.7 480.7 L752.5 481.0 L753.3 480.1 L754.1 480.1 L754.9 482.3 L755.7 478.4 L756.5 479.9 L757.3 486.2 L758.1 486.9 L758.9 482.7 L759.7 478.4 L760.5 473.9 L761.3 470.0 L762.1 467.3 L762.9 467.3 L763.7 469.8 L764.5 468.7 L765.3 467.0 L766.1 468.5 L766.9 470.9 L767.7 474.2 L768.5 470.5 L769.3 471.4 L770.1 472.8 L770.9 476.2 L771.7 476.5 L772.5 478.9 L773.3 474.3 L774.1 478.3 L774.9 474.8 L775.7 474.0 L776.5 474.6 L777.3 473.8 L778.1 470.3 L778.9 471.1 L779.7 469.0 L780.5 467.0 L781.3 467.2 L782.1 465.1 L782.9 464.5 L783.7 463.2 L784.5 461.3 L785.3 459.2 L786.1 456.8 L786.9 453.6 L787.7 448.7 L788.5 448.0 L789.3 440.9 L790.1 436.4 L790.9 437.0 L791.7 436.2 L792.5 437.2 L793.3 435.8 L794.1 436.5 L794.9 433.8 L795.7 434.0 L796.5 430.9 L797.3 428.5 L798.1 430.1 L798.9 432.5 L799.7 435.8 L800.5 437.2 L801.3 436.1 L802.1 434.3 L802.9 432.9 L803.7 434.8 L804.5 434.3 L805.3 436.5 L806.1 434.5 L806.9 435.1 L807.7 434.4 L808.5 435.5 L809.3 437.6 L810.1 440.5 L810.9 437.0 L811.7 434.4 L812.5 436.2 L813.3 437.9 L814.1 437.6 L814.9 436.6 L815.7 438.2 L816.5 437.2 L817.3 436.8 L818.1 439.2 L818.9 435.8 L819.7 436.3 L820.5 434.4 L821.3 434.0 L822.1 438.4 L822.9 443.6 L823.7 444.3 L824.5 439.8 L825.3 444.6 L826.1 442.2 L826.9 442.9 L827.7 444.9 L828.5 444.8 L829.3 447.1 L830.1 447.8 L830.9 447.7 L831.7 446.4 L832.5 442.9 L833.3 441.4 L834.1 440.3 L834.9 437.4 L835.7 438.9 L836.5 441.0 L837.3 438.1 L838.1 442.8 L838.9 446.2 L839.7 449.4 L840.5 452.3 L841.3 452.5 L842.1 454.4 L842.9 455.3 L843.7 455.5 L844.5 457.9 L845.3 455.8 L846.1 451.3 L846.9 448.8 L847.7 451.1 L848.5 449.5 L849.3 449.3 L850.1 448.7 L850.9 449.6 L851.7 448.3 L852.5 446.1 L853.3 446.2 L854.1 447.4 L854.9 445.1 L855.7 442.4 L856.5 440.3 L857.3 438.4 L858.1 441.3 L858.9 443.4 L859.7 444.3 L860.5 444.5 L861.3 443.8 L862.1 445.3 L862.9 446.4 L863.7 449.4 L864.5 448.6 L865.3 453.0 L866.1 452.4 L866.9 452.2 L867.7 455.0 L868.5 455.4 L869.3 455.4 L870.1 454.0 L870.9 456.9 L871.7 453.0 L872.5 455.4 L873.3 453.4 L874.1 452.2 L874.9 453.7 L875.7 450.7 L876.5 452.9 L877.3 451.8 L878.1 448.9 L878.9 449.7 L879.7 450.2 L880.5 446.8 L881.3 442.0 L882.1 440.1 L882.9 438.2 L883.7 436.2 L884.5 437.7 L885.3 437.5 L886.1 437.2 L886.9 434.4 L887.7 434.7 L888.5 434.2 L889.3 434.9 L890.1 431.7 L890.9 426.0 L891.7 424.8 L892.5 430.3 L893.3 430.2 L894.1 431.6 L894.9 434.4 L895.7 434.7 L896.5 435.8 L897.3 437.4 L898.1 436.1 L898.9 437.1 L899.7 438.8 L900.5 431.0 L901.3 432.7 L902.1 430.0 L902.9 429.2 L903.7 430.5 L904.5 430.2 L905.3 429.5 L906.1 429.8 L906.9 433.2 L907.7 435.2 L908.5 437.6 L909.3 433.4 L910.1 439.4 L910.9 438.8 L911.7 440.0 L912.5 438.5 L913.3 436.7 L914.1 433.3 L914.9 427.5 L915.7 425.1 L916.5 424.8 L917.3 425.4 L918.1 424.8 L918.9 420.8 L919.7 419.8 L920.5 423.6 L921.3 423.0 L922.1 420.8 L922.9 418.2 L923.7 420.3 L924.5 417.0 L925.3 412.4 L926.1 416.4 L926.9 412.4 L927.7 419.0 L928.5 418.4 L929.3 418.6 L930.1 415.8 L930.9 418.8 L931.7 424.8 L932.5 424.3 L933.3 420.9 L934.1 416.2 L934.9 415.8 L935.7 414.8 L936.5 414.7 L937.3 413.2 L938.1 413.0 L938.9 408.4 L939.7 407.5 L940.5 408.2 L941.3 401.7 L942.1 400.5 L942.9 401.7 L943.7 398.8 L944.5 395.6 L945.3 397.7 L946.1 392.1 L946.9 394.6 L947.7 393.9 L948.5 397.4 L949.3 399.9 L950.1 398.9 L950.9 401.9 L951.7 406.5 L952.5 409.0 L953.3 412.0 L954.1 417.8 L954.9 413.5 L955.7 418.1 L956.5 419.8 L957.3 421.3 L958.1 421.5 L958.9 424.5 L959.7 425.2 L960.5 425.9 L961.3 422.7 L962.1 419.0 L962.9 418.7 L963.7 421.6 L964.5 419.3 L965.3 420.1 L966.1 422.0 L966.9 430.8 L967.7 430.0 L968.5 426.1 L969.3 410.2 L969.3 408.1" stroke="#ff0000" stroke-width="1.4" fill="none" stroke-linejoin="miter"/>
<g shape-rendering="crispEdges" fill="none" stroke="#c4c4c4" stroke-width="1"><path d="M5.5 189.5V39.5H970.5V189.5H5.5"/></g>
<text x="6.30" y="48.1" font-size="9.8" fill="#c8c8c8">時</text>
<text x="16.10" y="48.1" font-size="9.8" fill="#c8c8c8">刻</text>
<text transform="scale(0.83,1)" x="34.16 40.06 45.96 51.87 57.77 63.67 69.58" y="48.1" text-anchor="middle" font-family="&quot;Liberation Sans&quot;,sans-serif" font-size="10.0" fill="#c8c8c8" xml:space="preserve">:05:50 </text>
<text x="60.20" y="48.1" font-size="9.8" fill="#c8c8c8">始</text>
<text x="70.00" y="48.1" font-size="9.8" fill="#c8c8c8">値</text>
<text transform="scale(0.83,1)" x="99.10 105.00 110.90 116.81 122.71 128.61 134.52 140.42" y="48.1" text-anchor="middle" font-family="&quot;Liberation Sans&quot;,sans-serif" font-size="10.0" fill="#c8c8c8" xml:space="preserve">:14,083 </text>
<text x="119.00" y="48.1" font-size="9.8" fill="#c8c8c8">高</text>
<text x="128.80" y="48.1" font-size="9.8" fill="#c8c8c8">値</text>
<text transform="scale(0.83,1)" x="169.94 175.84 181.75 187.65 193.55 199.46 205.36 211.27" y="48.1" text-anchor="middle" font-family="&quot;Liberation Sans&quot;,sans-serif" font-size="10.0" fill="#c8c8c8" xml:space="preserve">:14,083 </text>
<text x="177.80" y="48.1" font-size="9.8" fill="#c8c8c8">安</text>
<text x="187.60" y="48.1" font-size="9.8" fill="#c8c8c8">値</text>
<text transform="scale(0.83,1)" x="240.78 246.69 252.59 258.49 264.40 270.30 276.20 282.11" y="48.1" text-anchor="middle" font-family="&quot;Liberation Sans&quot;,sans-serif" font-size="10.0" fill="#c8c8c8" xml:space="preserve">:14,083 </text>
<text x="236.60" y="48.1" font-size="9.8" fill="#c8c8c8">終</text>
<text x="246.40" y="48.1" font-size="9.8" fill="#c8c8c8">値</text>
<text transform="scale(0.83,1)" x="311.63 317.53 323.43 329.34 335.24 341.14 347.05" y="48.1" text-anchor="middle" font-family="&quot;Liberation Sans&quot;,sans-serif" font-size="10.0" fill="#c8c8c8" xml:space="preserve">:14,083</text>
<text transform="scale(0.83,1)" x="851.14 857.05" y="184.6" text-anchor="middle" font-family="&quot;Liberation Sans&quot;,sans-serif" font-size="9.5" fill="#bcbcbc" xml:space="preserve">05</text>
<text transform="scale(0.83,1)" x="37.05 42.95" y="197.3" text-anchor="middle" font-family="&quot;Liberation Sans&quot;,sans-serif" font-size="10.0" fill="#f0f0f0" font-weight="bold" xml:space="preserve">06</text>
<text transform="scale(0.83,1)" x="69.10 75.00" y="197.5" text-anchor="middle" font-family="&quot;Liberation Sans&quot;,sans-serif" font-size="10.0" fill="#bcbcbc" xml:space="preserve">09</text>
<text transform="scale(0.83,1)" x="127.05 132.95" y="197.5" text-anchor="middle" font-family="&quot;Liberation Sans&quot;,sans-serif" font-size="10.0" fill="#bcbcbc" xml:space="preserve">10</text>
<text transform="scale(0.83,1)" x="185.36 191.27" y="197.5" text-anchor="middle" font-family="&quot;Liberation Sans&quot;,sans-serif" font-size="10.0" fill="#bcbcbc" xml:space="preserve">11</text>
<text transform="scale(0.83,1)" x="242.71 248.61" y="197.5" text-anchor="middle" font-family="&quot;Liberation Sans&quot;,sans-serif" font-size="10.0" fill="#bcbcbc" xml:space="preserve">12</text>
<text transform="scale(0.83,1)" x="301.75 307.65" y="197.5" text-anchor="middle" font-family="&quot;Liberation Sans&quot;,sans-serif" font-size="10.0" fill="#bcbcbc" xml:space="preserve">13</text>
<text transform="scale(0.83,1)" x="355.72 361.63" y="197.5" text-anchor="middle" font-family="&quot;Liberation Sans&quot;,sans-serif" font-size="10.0" fill="#bcbcbc" xml:space="preserve">14</text>
<text transform="scale(0.83,1)" x="413.31 419.22" y="197.5" text-anchor="middle" font-family="&quot;Liberation Sans&quot;,sans-serif" font-size="10.0" fill="#bcbcbc" xml:space="preserve">15</text>
<text transform="scale(0.83,1)" x="453.43 459.34" y="197.5" text-anchor="middle" font-family="&quot;Liberation Sans&quot;,sans-serif" font-size="10.0" fill="#bcbcbc" xml:space="preserve">17</text>
<text transform="scale(0.83,1)" x="511.39 517.29" y="197.5" text-anchor="middle" font-family="&quot;Liberation Sans&quot;,sans-serif" font-size="10.0" fill="#bcbcbc" xml:space="preserve">18</text>
<text transform="scale(0.83,1)" x="569.46 575.36" y="197.5" text-anchor="middle" font-family="&quot;Liberation Sans&quot;,sans-serif" font-size="10.0" fill="#bcbcbc" xml:space="preserve">19</text>
<text transform="scale(0.83,1)" x="624.76 630.66" y="197.5" text-anchor="middle" font-family="&quot;Liberation Sans&quot;,sans-serif" font-size="10.0" fill="#bcbcbc" xml:space="preserve">20</text>
<text transform="scale(0.83,1)" x="678.61 684.52" y="197.5" text-anchor="middle" font-family="&quot;Liberation Sans&quot;,sans-serif" font-size="10.0" fill="#bcbcbc" xml:space="preserve">21</text>
<text transform="scale(0.83,1)" x="733.92 739.82" y="197.5" text-anchor="middle" font-family="&quot;Liberation Sans&quot;,sans-serif" font-size="10.0" fill="#bcbcbc" xml:space="preserve">22</text>
<text transform="scale(0.83,1)" x="792.35 798.25" y="197.5" text-anchor="middle" font-family="&quot;Liberation Sans&quot;,sans-serif" font-size="10.0" fill="#bcbcbc" xml:space="preserve">23</text>
<text transform="scale(0.83,1)" x="851.02 856.93" y="197.5" text-anchor="middle" font-family="&quot;Liberation Sans&quot;,sans-serif" font-size="10.0" fill="#bcbcbc" xml:space="preserve">00</text>
<text transform="scale(0.83,1)" x="908.49 914.40" y="197.5" text-anchor="middle" font-family="&quot;Liberation Sans&quot;,sans-serif" font-size="10.0" fill="#bcbcbc" xml:space="preserve">01</text>
<text transform="scale(0.83,1)" x="966.20 972.11" y="197.5" text-anchor="middle" font-family="&quot;Liberation Sans&quot;,sans-serif" font-size="10.0" fill="#bcbcbc" xml:space="preserve">02</text>
<text transform="scale(0.83,1)" x="1021.99 1027.89" y="197.5" text-anchor="middle" font-family="&quot;Liberation Sans&quot;,sans-serif" font-size="10.0" fill="#bcbcbc" xml:space="preserve">03</text>
<text transform="scale(0.83,1)" x="1071.39 1077.29" y="197.5" text-anchor="middle" font-family="&quot;Liberation Sans&quot;,sans-serif" font-size="10.0" fill="#bcbcbc" xml:space="preserve">04</text>
<text transform="scale(0.83,1)" x="1122.35 1128.25" y="197.5" text-anchor="middle" font-family="&quot;Liberation Sans&quot;,sans-serif" font-size="10.0" fill="#bcbcbc" xml:space="preserve">05</text>
<text transform="scale(0.83,1)" x="1155.24 1161.14" y="197.5" text-anchor="middle" font-family="&quot;Liberation Sans&quot;,sans-serif" font-size="10.0" fill="#bcbcbc" xml:space="preserve">06</text>
<clipPath id="cl0"><rect x="971" y="39" width="47" height="163"/></clipPath>
<g clip-path="url(#cl0)">
<text transform="scale(0.83,1)" x="1173.31 1179.22 1185.12 1191.02 1196.93 1202.83" y="60.3" text-anchor="middle" font-family="&quot;Liberation Sans&quot;,sans-serif" font-size="10.0" fill="#c4c4c4" xml:space="preserve">14,100</text>
<text transform="scale(0.83,1)" x="1173.31 1179.22 1185.12 1191.02 1196.93 1202.83" y="89.80000000000001" text-anchor="middle" font-family="&quot;Liberation Sans&quot;,sans-serif" font-size="10.0" fill="#c4c4c4" xml:space="preserve">14,050</text>
<text transform="scale(0.83,1)" x="1173.31 1179.22 1185.12 1191.02 1196.93 1202.83" y="118.7" text-anchor="middle" font-family="&quot;Liberation Sans&quot;,sans-serif" font-size="10.0" fill="#c4c4c4" xml:space="preserve">14,000</text>
<text transform="scale(0.83,1)" x="1173.31 1179.22 1185.12 1191.02 1196.93 1202.83" y="148.0" text-anchor="middle" font-family="&quot;Liberation Sans&quot;,sans-serif" font-size="10.0" fill="#c4c4c4" xml:space="preserve">13,950</text>
<text transform="scale(0.83,1)" x="1173.31 1179.22 1185.12 1191.02 1196.93 1202.83" y="176.6" text-anchor="middle" font-family="&quot;Liberation Sans&quot;,sans-serif" font-size="10.0" fill="#c4c4c4" xml:space="preserve">13,900</text>
<text transform="scale(0.83,1)" x="1173.31 1179.22 1185.12 1191.02 1196.93 1202.83" y="207.0" text-anchor="middle" font-family="&quot;Liberation Sans&quot;,sans-serif" font-size="10.0" fill="#c4c4c4" xml:space="preserve">13,850</text>
</g>
<rect x="971" y="55" width="47" height="17" fill="#dcdcdc"/>
<text transform="scale(0.83,1)" x="1184.04 1189.94 1195.84 1201.75 1207.65 1213.55" y="67.2" text-anchor="middle" font-family="&quot;Liberation Sans&quot;,sans-serif" font-size="10.0" fill="#000" font-weight="bold" xml:space="preserve">14,098</text>
<g shape-rendering="crispEdges" fill="none" stroke="#c4c4c4" stroke-width="1"><path d="M5.5 370.5V206.5H970.5V370.5H5.5"/></g>
<text x="6.30" y="215.1" font-size="9.8" fill="#c8c8c8">時</text>
<text x="16.10" y="215.1" font-size="9.8" fill="#c8c8c8">刻</text>
<text transform="scale(0.83,1)" x="34.16 40.06 45.96 51.87 57.77 63.67 69.58" y="215.1" text-anchor="middle" font-family="&quot;Liberation Sans&quot;,sans-serif" font-size="10.0" fill="#c8c8c8" xml:space="preserve">:05:50 </text>
<text x="60.20" y="215.1" font-size="9.8" fill="#c8c8c8">始</text>
<text x="70.00" y="215.1" font-size="9.8" fill="#c8c8c8">値</text>
<text transform="scale(0.83,1)" x="99.10 105.00 110.90 116.81 122.71 128.61 134.52" y="215.1" text-anchor="middle" font-family="&quot;Liberation Sans&quot;,sans-serif" font-size="10.0" fill="#c8c8c8" xml:space="preserve">:4,540 </text>
<text x="114.10" y="215.1" font-size="9.8" fill="#c8c8c8">高</text>
<text x="123.90" y="215.1" font-size="9.8" fill="#c8c8c8">値</text>
<text transform="scale(0.83,1)" x="164.04 169.94 175.84 181.75 187.65 193.55 199.46" y="215.1" text-anchor="middle" font-family="&quot;Liberation Sans&quot;,sans-serif" font-size="10.0" fill="#c8c8c8" xml:space="preserve">:4,540 </text>
<text x="168.00" y="215.1" font-size="9.8" fill="#c8c8c8">安</text>
<text x="177.80" y="215.1" font-size="9.8" fill="#c8c8c8">値</text>
<text transform="scale(0.83,1)" x="228.98 234.88 240.78 246.69 252.59 258.49 264.40" y="215.1" text-anchor="middle" font-family="&quot;Liberation Sans&quot;,sans-serif" font-size="10.0" fill="#c8c8c8" xml:space="preserve">:4,537 </text>
<text x="221.90" y="215.1" font-size="9.8" fill="#c8c8c8">終</text>
<text x="231.70" y="215.1" font-size="9.8" fill="#c8c8c8">値</text>
<text transform="scale(0.83,1)" x="293.92 299.82 305.72 311.63 317.53 323.43" y="215.1" text-anchor="middle" font-family="&quot;Liberation Sans&quot;,sans-serif" font-size="10.0" fill="#c8c8c8" xml:space="preserve">:4,537</text>
<text transform="scale(0.83,1)" x="851.14 857.05" y="365.6" text-anchor="middle" font-family="&quot;Liberation Sans&quot;,sans-serif" font-size="9.5" fill="#bcbcbc" xml:space="preserve">05</text>
<text transform="scale(0.83,1)" x="37.05 42.95" y="378.3" text-anchor="middle" font-family="&quot;Liberation Sans&quot;,sans-serif" font-size="10.0" fill="#f0f0f0" font-weight="bold" xml:space="preserve">06</text>
<text transform="scale(0.83,1)" x="69.10 75.00" y="378.5" text-anchor="middle" font-family="&quot;Liberation Sans&quot;,sans-serif" font-size="10.0" fill="#bcbcbc" xml:space="preserve">09</text>
<text transform="scale(0.83,1)" x="127.05 132.95" y="378.5" text-anchor="middle" font-family="&quot;Liberation Sans&quot;,sans-serif" font-size="10.0" fill="#bcbcbc" xml:space="preserve">10</text>
<text transform="scale(0.83,1)" x="185.36 191.27" y="378.5" text-anchor="middle" font-family="&quot;Liberation Sans&quot;,sans-serif" font-size="10.0" fill="#bcbcbc" xml:space="preserve">11</text>
<text transform="scale(0.83,1)" x="242.71 248.61" y="378.5" text-anchor="middle" font-family="&quot;Liberation Sans&quot;,sans-serif" font-size="10.0" fill="#bcbcbc" xml:space="preserve">12</text>
<text transform="scale(0.83,1)" x="301.75 307.65" y="378.5" text-anchor="middle" font-family="&quot;Liberation Sans&quot;,sans-serif" font-size="10.0" fill="#bcbcbc" xml:space="preserve">13</text>
<text transform="scale(0.83,1)" x="355.72 361.63" y="378.5" text-anchor="middle" font-family="&quot;Liberation Sans&quot;,sans-serif" font-size="10.0" fill="#bcbcbc" xml:space="preserve">14</text>
<text transform="scale(0.83,1)" x="413.31 419.22" y="378.5" text-anchor="middle" font-family="&quot;Liberation Sans&quot;,sans-serif" font-size="10.0" fill="#bcbcbc" xml:space="preserve">15</text>
<text transform="scale(0.83,1)" x="453.43 459.34" y="378.5" text-anchor="middle" font-family="&quot;Liberation Sans&quot;,sans-serif" font-size="10.0" fill="#bcbcbc" xml:space="preserve">17</text>
<text transform="scale(0.83,1)" x="511.39 517.29" y="378.5" text-anchor="middle" font-family="&quot;Liberation Sans&quot;,sans-serif" font-size="10.0" fill="#bcbcbc" xml:space="preserve">18</text>
<text transform="scale(0.83,1)" x="569.46 575.36" y="378.5" text-anchor="middle" font-family="&quot;Liberation Sans&quot;,sans-serif" font-size="10.0" fill="#bcbcbc" xml:space="preserve">19</text>
<text transform="scale(0.83,1)" x="624.76 630.66" y="378.5" text-anchor="middle" font-family="&quot;Liberation Sans&quot;,sans-serif" font-size="10.0" fill="#bcbcbc" xml:space="preserve">20</text>
<text transform="scale(0.83,1)" x="678.61 684.52" y="378.5" text-anchor="middle" font-family="&quot;Liberation Sans&quot;,sans-serif" font-size="10.0" fill="#bcbcbc" xml:space="preserve">21</text>
<text transform="scale(0.83,1)" x="733.92 739.82" y="378.5" text-anchor="middle" font-family="&quot;Liberation Sans&quot;,sans-serif" font-size="10.0" fill="#bcbcbc" xml:space="preserve">22</text>
<text transform="scale(0.83,1)" x="792.35 798.25" y="378.5" text-anchor="middle" font-family="&quot;Liberation Sans&quot;,sans-serif" font-size="10.0" fill="#bcbcbc" xml:space="preserve">23</text>
<text transform="scale(0.83,1)" x="851.02 856.93" y="378.5" text-anchor="middle" font-family="&quot;Liberation Sans&quot;,sans-serif" font-size="10.0" fill="#bcbcbc" xml:space="preserve">00</text>
<text transform="scale(0.83,1)" x="908.49 914.40" y="378.5" text-anchor="middle" font-family="&quot;Liberation Sans&quot;,sans-serif" font-size="10.0" fill="#bcbcbc" xml:space="preserve">01</text>
<text transform="scale(0.83,1)" x="966.20 972.11" y="378.5" text-anchor="middle" font-family="&quot;Liberation Sans&quot;,sans-serif" font-size="10.0" fill="#bcbcbc" xml:space="preserve">02</text>
<text transform="scale(0.83,1)" x="1021.99 1027.89" y="378.5" text-anchor="middle" font-family="&quot;Liberation Sans&quot;,sans-serif" font-size="10.0" fill="#bcbcbc" xml:space="preserve">03</text>
<text transform="scale(0.83,1)" x="1071.39 1077.29" y="378.5" text-anchor="middle" font-family="&quot;Liberation Sans&quot;,sans-serif" font-size="10.0" fill="#bcbcbc" xml:space="preserve">04</text>
<text transform="scale(0.83,1)" x="1122.35 1128.25" y="378.5" text-anchor="middle" font-family="&quot;Liberation Sans&quot;,sans-serif" font-size="10.0" fill="#bcbcbc" xml:space="preserve">05</text>
<text transform="scale(0.83,1)" x="1155.24 1161.14" y="378.5" text-anchor="middle" font-family="&quot;Liberation Sans&quot;,sans-serif" font-size="10.0" fill="#bcbcbc" xml:space="preserve">06</text>
<clipPath id="cl1"><rect x="971" y="206" width="47" height="177"/></clipPath>
<g clip-path="url(#cl1)">
<text transform="scale(0.83,1)" x="1173.31 1179.22 1185.12 1191.02 1196.93" y="217.8" text-anchor="middle" font-family="&quot;Liberation Sans&quot;,sans-serif" font-size="10.0" fill="#c4c4c4" xml:space="preserve">4,550</text>
<text transform="scale(0.83,1)" x="1173.31 1179.22 1185.12 1191.02 1196.93" y="243.70000000000002" text-anchor="middle" font-family="&quot;Liberation Sans&quot;,sans-serif" font-size="10.0" fill="#c4c4c4" xml:space="preserve">4,540</text>
<text transform="scale(0.83,1)" x="1173.31 1179.22 1185.12 1191.02 1196.93" y="269.79999999999995" text-anchor="middle" font-family="&quot;Liberation Sans&quot;,sans-serif" font-size="10.0" fill="#c4c4c4" xml:space="preserve">4,530</text>
<text transform="scale(0.83,1)" x="1173.31 1179.22 1185.12 1191.02 1196.93" y="295.9" text-anchor="middle" font-family="&quot;Liberation Sans&quot;,sans-serif" font-size="10.0" fill="#c4c4c4" xml:space="preserve">4,520</text>
<text transform="scale(0.83,1)" x="1173.31 1179.22 1185.12 1191.02 1196.93" y="322.0" text-anchor="middle" font-family="&quot;Liberation Sans&quot;,sans-serif" font-size="10.0" fill="#c4c4c4" xml:space="preserve">4,510</text>
<text transform="scale(0.83,1)" x="1173.31 1179.22 1185.12 1191.02 1196.93" y="348.09999999999997" text-anchor="middle" font-family="&quot;Liberation Sans&quot;,sans-serif" font-size="10.0" fill="#c4c4c4" xml:space="preserve">4,500</text>
<text transform="scale(0.83,1)" x="1173.31 1179.22 1185.12 1191.02 1196.93" y="374.2" text-anchor="middle" font-family="&quot;Liberation Sans&quot;,sans-serif" font-size="10.0" fill="#c4c4c4" xml:space="preserve">4,490</text>
</g>
<rect x="971" y="240" width="47" height="17" fill="#dcdcdc"/>
<text transform="scale(0.83,1)" x="1186.99 1192.89 1198.80 1204.70 1210.60" y="252.2" text-anchor="middle" font-family="&quot;Liberation Sans&quot;,sans-serif" font-size="10.0" fill="#000" font-weight="bold" xml:space="preserve">4,539</text>
<g shape-rendering="crispEdges" fill="none" stroke="#c4c4c4" stroke-width="1"><path d="M5.5 534.5V387.5H970.5V534.5H5.5"/></g>
<text transform="scale(0.83,1)" x="10.54" y="396.1" text-anchor="middle" font-family="&quot;Liberation Sans&quot;,sans-serif" font-size="10.0" fill="#c8c8c8" xml:space="preserve">[</text>
<text x="11.20" y="396.1" font-size="9.8" fill="#c8c8c8">金</text>
<text transform="scale(0.83,1)" x="28.25 34.16 40.06 45.96 51.87 57.77 63.67 69.58 75.48 81.39 87.29 93.19 99.10" y="396.1" text-anchor="middle" font-family="&quot;Liberation Sans&quot;,sans-serif" font-size="10.0" fill="#c8c8c8" xml:space="preserve"> 26/02 14,083</text>
<text x="86.90" y="396.1" font-size="9.8" fill="#c8c8c8">×</text>
<text transform="scale(0.83,1)" x="116.81 122.71 128.61 134.52 140.42" y="396.1" text-anchor="middle" font-family="&quot;Liberation Sans&quot;,sans-serif" font-size="10.0" fill="#c8c8c8" xml:space="preserve">1.00]</text>
<text x="119.00" y="396.1" font-size="9.8" fill="#c8c8c8">－</text>
<text transform="scale(0.83,1)" x="158.13" y="396.1" text-anchor="middle" font-family="&quot;Liberation Sans&quot;,sans-serif" font-size="10.0" fill="#c8c8c8" xml:space="preserve">[</text>
<text x="133.70" y="396.1" font-size="9.8" fill="#c8c8c8">白</text>
<text x="143.50" y="396.1" font-size="9.8" fill="#c8c8c8">金</text>
<text transform="scale(0.83,1)" x="187.65 193.55 199.46 205.36 211.27 217.17 223.07 228.98 234.88 240.78 246.69 252.59" y="396.1" text-anchor="middle" font-family="&quot;Liberation Sans&quot;,sans-serif" font-size="10.0" fill="#c8c8c8" xml:space="preserve"> 26/02 4,537</text>
<text x="214.30" y="396.1" font-size="9.8" fill="#c8c8c8">×</text>
<text transform="scale(0.83,1)" x="270.30 276.20 282.11 288.01 293.92 299.82" y="396.1" text-anchor="middle" font-family="&quot;Liberation Sans&quot;,sans-serif" font-size="10.0" fill="#c8c8c8" xml:space="preserve">1.00] </text>
<text x="251.30" y="396.1" font-size="9.8" fill="#c8c8c8">終</text>
<text x="261.10" y="396.1" font-size="9.8" fill="#c8c8c8">値</text>
<text transform="scale(0.83,1)" x="329.34" y="396.1" text-anchor="middle" font-family="&quot;Liberation Sans&quot;,sans-serif" font-size="10.0" fill="#c8c8c8" xml:space="preserve"> </text>
<text x="275.80" y="396.1" font-size="9.8" fill="#c8c8c8">時</text>
<text x="285.60" y="396.1" font-size="9.8" fill="#c8c8c8">刻</text>
<text transform="scale(0.83,1)" x="358.86 364.76 370.66 376.57 382.47 388.37 394.28 400.18 406.08 411.99 417.89 423.80" y="396.1" text-anchor="middle" font-family="&quot;Liberation Sans&quot;,sans-serif" font-size="10.0" fill="#c8c8c8" xml:space="preserve">:05:50 9,546</text>
<text transform="scale(0.83,1)" x="851.14 857.05" y="529.6" text-anchor="middle" font-family="&quot;Liberation Sans&quot;,sans-serif" font-size="9.5" fill="#bcbcbc" xml:space="preserve">05</text>
<text transform="scale(0.83,1)" x="37.05 42.95" y="542.3" text-anchor="middle" font-family="&quot;Liberation Sans&quot;,sans-serif" font-size="10.0" fill="#f0f0f0" font-weight="bold" xml:space="preserve">06</text>
<text transform="scale(0.83,1)" x="69.10 75.00" y="542.5" text-anchor="middle" font-family="&quot;Liberation Sans&quot;,sans-serif" font-size="10.0" fill="#bcbcbc" xml:space="preserve">09</text>
<text transform="scale(0.83,1)" x="127.05 132.95" y="542.5" text-anchor="middle" font-family="&quot;Liberation Sans&quot;,sans-serif" font-size="10.0" fill="#bcbcbc" xml:space="preserve">10</text>
<text transform="scale(0.83,1)" x="185.36 191.27" y="542.5" text-anchor="middle" font-family="&quot;Liberation Sans&quot;,sans-serif" font-size="10.0" fill="#bcbcbc" xml:space="preserve">11</text>
<text transform="scale(0.83,1)" x="242.71 248.61" y="542.5" text-anchor="middle" font-family="&quot;Liberation Sans&quot;,sans-serif" font-size="10.0" fill="#bcbcbc" xml:space="preserve">12</text>
<text transform="scale(0.83,1)" x="301.75 307.65" y="542.5" text-anchor="middle" font-family="&quot;Liberation Sans&quot;,sans-serif" font-size="10.0" fill="#bcbcbc" xml:space="preserve">13</text>
<text transform="scale(0.83,1)" x="355.72 361.63" y="542.5" text-anchor="middle" font-family="&quot;Liberation Sans&quot;,sans-serif" font-size="10.0" fill="#bcbcbc" xml:space="preserve">14</text>
<text transform="scale(0.83,1)" x="413.31 419.22" y="542.5" text-anchor="middle" font-family="&quot;Liberation Sans&quot;,sans-serif" font-size="10.0" fill="#bcbcbc" xml:space="preserve">15</text>
<text transform="scale(0.83,1)" x="453.43 459.34" y="542.5" text-anchor="middle" font-family="&quot;Liberation Sans&quot;,sans-serif" font-size="10.0" fill="#bcbcbc" xml:space="preserve">17</text>
<text transform="scale(0.83,1)" x="511.39 517.29" y="542.5" text-anchor="middle" font-family="&quot;Liberation Sans&quot;,sans-serif" font-size="10.0" fill="#bcbcbc" xml:space="preserve">18</text>
<text transform="scale(0.83,1)" x="569.46 575.36" y="542.5" text-anchor="middle" font-family="&quot;Liberation Sans&quot;,sans-serif" font-size="10.0" fill="#bcbcbc" xml:space="preserve">19</text>
<text transform="scale(0.83,1)" x="624.76 630.66" y="542.5" text-anchor="middle" font-family="&quot;Liberation Sans&quot;,sans-serif" font-size="10.0" fill="#bcbcbc" xml:space="preserve">20</text>
<text transform="scale(0.83,1)" x="678.61 684.52" y="542.5" text-anchor="middle" font-family="&quot;Liberation Sans&quot;,sans-serif" font-size="10.0" fill="#bcbcbc" xml:space="preserve">21</text>
<text transform="scale(0.83,1)" x="733.92 739.82" y="542.5" text-anchor="middle" font-family="&quot;Liberation Sans&quot;,sans-serif" font-size="10.0" fill="#bcbcbc" xml:space="preserve">22</text>
<text transform="scale(0.83,1)" x="792.35 798.25" y="542.5" text-anchor="middle" font-family="&quot;Liberation Sans&quot;,sans-serif" font-size="10.0" fill="#bcbcbc" xml:space="preserve">23</text>
<text transform="scale(0.83,1)" x="851.02 856.93" y="542.5" text-anchor="middle" font-family="&quot;Liberation Sans&quot;,sans-serif" font-size="10.0" fill="#bcbcbc" xml:space="preserve">00</text>
<text transform="scale(0.83,1)" x="908.49 914.40" y="542.5" text-anchor="middle" font-family="&quot;Liberation Sans&quot;,sans-serif" font-size="10.0" fill="#bcbcbc" xml:space="preserve">01</text>
<text transform="scale(0.83,1)" x="966.20 972.11" y="542.5" text-anchor="middle" font-family="&quot;Liberation Sans&quot;,sans-serif" font-size="10.0" fill="#bcbcbc" xml:space="preserve">02</text>
<text transform="scale(0.83,1)" x="1021.99 1027.89" y="542.5" text-anchor="middle" font-family="&quot;Liberation Sans&quot;,sans-serif" font-size="10.0" fill="#bcbcbc" xml:space="preserve">03</text>
<text transform="scale(0.83,1)" x="1071.39 1077.29" y="542.5" text-anchor="middle" font-family="&quot;Liberation Sans&quot;,sans-serif" font-size="10.0" fill="#bcbcbc" xml:space="preserve">04</text>
<text transform="scale(0.83,1)" x="1122.35 1128.25" y="542.5" text-anchor="middle" font-family="&quot;Liberation Sans&quot;,sans-serif" font-size="10.0" fill="#bcbcbc" xml:space="preserve">05</text>
<text transform="scale(0.83,1)" x="1155.24 1161.14" y="542.5" text-anchor="middle" font-family="&quot;Liberation Sans&quot;,sans-serif" font-size="10.0" fill="#bcbcbc" xml:space="preserve">06</text>
<clipPath id="cl2"><rect x="971" y="387" width="47" height="160"/></clipPath>
<g clip-path="url(#cl2)">
<text transform="scale(0.83,1)" x="1173.31 1179.22 1185.12 1191.02 1196.93" y="413.0" text-anchor="middle" font-family="&quot;Liberation Sans&quot;,sans-serif" font-size="10.0" fill="#c4c4c4" xml:space="preserve">9,550</text>
<text transform="scale(0.83,1)" x="1173.31 1179.22 1185.12 1191.02 1196.93" y="450.59999999999997" text-anchor="middle" font-family="&quot;Liberation Sans&quot;,sans-serif" font-size="10.0" fill="#c4c4c4" xml:space="preserve">9,500</text>
<text transform="scale(0.83,1)" x="1173.31 1179.22 1185.12 1191.02 1196.93" y="488.09999999999997" text-anchor="middle" font-family="&quot;Liberation Sans&quot;,sans-serif" font-size="10.0" fill="#c4c4c4" xml:space="preserve">9,450</text>
<text transform="scale(0.83,1)" x="1173.31 1179.22 1185.12 1191.02 1196.93" y="525.6999999999999" text-anchor="middle" font-family="&quot;Liberation Sans&quot;,sans-serif" font-size="10.0" fill="#c4c4c4" xml:space="preserve">9,400</text>
</g>
<rect x="971" y="400" width="47" height="17" fill="#dcdcdc"/>
<text transform="scale(0.83,1)" x="1186.99 1192.89 1198.80 1204.70 1210.60" y="412.2" text-anchor="middle" font-family="&quot;Liberation Sans&quot;,sans-serif" font-size="10.0" fill="#000" font-weight="bold" xml:space="preserve">9,559</text>
<g shape-rendering="crispEdges"><rect x="5" y="202" width="1013" height="1" fill="#d6d6d6"/><rect x="5" y="203" width="1013" height="2" fill="#fbfbfb"/><rect x="5" y="205" width="1013" height="1" fill="#bdbdbd"/></g>
<g shape-rendering="crispEdges"><rect x="5" y="383" width="1013" height="1" fill="#d6d6d6"/><rect x="5" y="384" width="1013" height="2" fill="#fbfbfb"/><rect x="5" y="386" width="1013" height="1" fill="#bdbdbd"/></g>
</svg>
<div class="abs" id="ftop"></div><div class="abs" id="fleft"></div><div class="abs" id="fleft2"></div>
<div class="abs" id="fr1"></div><div class="abs" id="fr2"></div><div class="abs" id="fr3"></div>
<div class="abs" id="fb1"></div><div class="abs" id="fb2"></div><div class="abs" id="fb3"></div>

<!-- title bar -->
<svg class="abs" style="left:8px;top:5px" width="12" height="13" viewBox="0 0 12 13">
<path d="M0.5 0.5V11.5H11.5" stroke="#9a9a9a" fill="none"/>
<path d="M2.5 4V10" stroke="#ff1020" stroke-width="1.6"/><path d="M4.5 2V8" stroke="#2060ff" stroke-width="1.6"/>
<path d="M6.5 1V7" stroke="#ff1020" stroke-width="1.6"/><path d="M8.3 2V8" stroke="#2060ff" stroke-width="1.4"/><path d="M10 3V9" stroke="#ff1020" stroke-width="1.6"/>
</svg>
<div class="abs" id="ttext">金1分足[2026/02]1.00 - 白金1分足[2026/02]1.00</div>
<svg class="abs" style="left:954px;top:5px" width="14" height="13" viewBox="0 0 14 13"><rect x="1.5" y="1.5" width="8" height="8" fill="#f0f0f0" stroke="#8a8a8a"/><rect x="4.5" y="4" width="8" height="6" fill="#e0e0e0" stroke="#6e6e6e" stroke-width="1.4"/></svg>
<div class="wb" style="left:973px"><div class="abs" style="left:4px;top:8px;width:5px;height:2px;background:#555"></div></div>
<div class="wb" style="left:989px"><div class="abs" style="left:3px;top:3px;width:6px;height:6px;border:1px solid #555;border-top-width:2px;box-sizing:border-box"></div></div>
<div class="wb" style="left:1005px"><svg class="abs" style="left:2px;top:2px" width="8" height="8" viewBox="0 0 8 8"><path d="M1 1L7 7M7 1L1 7" stroke="#555" stroke-width="1.4"/></svg></div>

<!-- toolbar -->
<div class="tt" style="left:9px">金</div>
<div class="tt" style="left:27px">2026/02</div>
<div class="inp" style="left:65px;width:38px">1.00<div class="spin"></div></div>
<div class="sep" style="left:107px"></div>
<div class="tt" style="left:113px">白金</div>
<div class="tt" style="left:141px">2026/02</div>
<div class="inp" style="left:178px;width:39px">1.00<div class="spin"></div></div>
<div class="sep" style="left:221px"></div>
<div class="tt" style="left:227px">分足</div>
<div class="dd" style="left:250px"></div>
<div class="inp" style="left:257px;width:37px">1200<div class="spin"></div></div>
<div class="tt" style="left:300px">1分足</div>
<div class="dd" style="left:327px"></div>
<div class="sep" style="left:337px"></div>
<div class="sel" style="left:340px;width:15px;background:#cdced7;border-color:#8a8c96 #e8e9ee #e8e9ee #8a8c96"></div>
<svg class="abs" style="left:342px;top:23px" width="12" height="12" viewBox="0 0 12 12"><path d="M0.5 3.3H11.5M2.8 0.5V12" stroke="#8a8adc" stroke-width="1.3" fill="none"/><path d="M9.6 10.4L5.6 6.4M5.4 10V6.2H9.2" stroke="#9020b0" stroke-width="1.5" fill="none"/></svg>
<div class="sep" style="left:360px"></div>
<div class="sel" style="left:363px;width:14px;background:#a9abb6;border-color:#80828c #c8cad2 #c8cad2 #80828c"></div>
<svg class="abs" style="left:364px;top:23px" width="12" height="12" viewBox="0 0 12 12"><path d="M2 1L10 5.6L7 6.6L9.6 10.6L8 11.4L5.6 7.4L3 10Z" fill="#6c55cc" stroke="#f4f0ff" stroke-width="1"/></svg>
<svg class="abs" style="left:382px;top:23px" width="12" height="12" viewBox="0 0 12 12"><path d="M3 11V8L1 5.5L2.2 4.6L4 6.5V2H5.3V0.8H6.8V2H8.2V1.4H9.6V2.6H11V8L10 11Z" fill="#fbe3c0" stroke="#c07830" stroke-width="0.9"/></svg>
<svg class="abs" style="left:401px;top:23px" width="12" height="12" viewBox="0 0 12 12"><path d="M1 11L2 8L9 1L11 3L4 10Z" fill="#f0b050" stroke="#c08030" stroke-width="0.8"/><path d="M1 11L2 8L4 10Z" fill="#f4e0c0"/></svg>
<svg class="abs" style="left:419px;top:23px" width="12" height="12" viewBox="0 0 12 12"><path d="M1 10L3 7L9 1L11 3L5 9L2 10.5Z" fill="#4a78d8" stroke="#2a50b0" stroke-width="0.8"/><path d="M7 8L10 11L11 8Z" fill="#2a50b0"/></svg>
<div class="sep" style="left:438px"></div>
<svg class="abs" style="left:443px;top:23px" width="12" height="12" viewBox="0 0 12 12"><rect x="0.5" y="0.5" width="11" height="11" fill="#e2e5ee"/><path d="M2.2 6.5V11M4.9 1.8V11M7.5 3.2V11M9.8 7V11" stroke="#2d8cff" stroke-width="1.7"/><path d="M0.5 0.5V11.5H11.5" stroke="#7a7e8c" fill="none"/></svg>
<div class="dd" style="left:457px"></div>
<svg class="abs" style="left:465px;top:23px" width="12" height="12" viewBox="0 0 12 12"><rect x="0.5" y="0.5" width="11" height="11" fill="#e2e5ee"/><path d="M2.2 6.5V11M4.9 1.8V11M7.5 3.2V11M9.8 7V11" stroke="#2d8cff" stroke-width="1.7"/><path d="M0.5 0.5V11.5H11.5" stroke="#7a7e8c" fill="none"/><path d="M1.5 1.5L10.5 10M10.5 1.5L1.5 10" stroke="#f02030" stroke-width="1.5"/></svg>
<div class="sep" style="left:484px"></div>
<svg class="abs" style="left:488px;top:22px" width="14" height="14" viewBox="0 0 14 14"><path d="M9.6 11.2A4.8 4.8 0 1 1 5.8 2.6" stroke="#2a90f0" stroke-width="2.2" fill="none"/><path d="M2.6 0.8H7.6V5.4Z" fill="#2a80f0"/><text x="6.6" y="10" font-size="7.5" font-weight="bold" fill="#2060d0" font-family="'Liberation Sans',sans-serif">R</text></svg>
<svg class="abs" style="left:998px;top:21px" width="16" height="16" viewBox="0 0 16 16"><path d="M3.2 13L8.6 7.6" stroke="#5c5cf2" stroke-width="2.6" stroke-linecap="round"/><circle cx="10.6" cy="5.4" r="3.1" fill="#7272f6"/><path d="M10.4 5.6L14.5 1.5" stroke="#d3d7e1" stroke-width="2.2"/></svg>
</body>
</html>
